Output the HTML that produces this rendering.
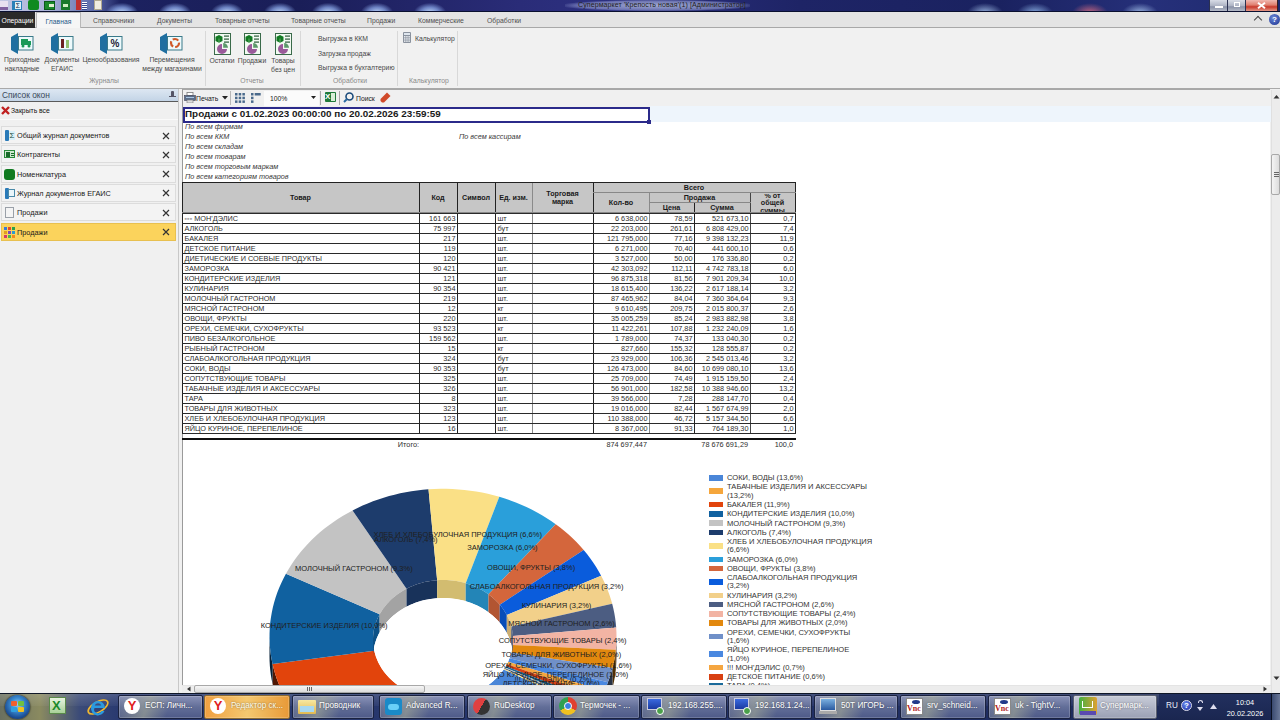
<!DOCTYPE html>
<html><head><meta charset="utf-8">
<style>
*{box-sizing:border-box;margin:0;padding:0}
html,body{width:1280px;height:720px;overflow:hidden;background:#f0f0f0;font-family:"Liberation Sans",sans-serif;color:#222}
.a{position:absolute;white-space:nowrap}
#titlebar{position:absolute;left:0;top:0;width:1280px;height:12px;background:linear-gradient(90deg,#c4c8e4 0px,#a8b0d8 50px,#5a68a8 95px,#1c2260 120px,#1a1e58 300px,#2a2c78 520px,#2c3080 600px,#1e2466 800px,#1a2260 1000px,#26307a 1150px,#1e2a6e 1280px);border-bottom:1px solid #0a1030;overflow:hidden}
.blob{position:absolute;border-radius:50%;filter:blur(3px)}
#tabs{position:absolute;left:0;top:12px;width:1280px;height:16px;background:#e4e4e4;border-bottom:1px solid #a8a8a8;font-size:6.8px;color:#505050}
.tab{position:absolute;top:0;height:16px;line-height:18px;text-align:center}
#ribbon{position:absolute;left:0;top:28px;width:1280px;height:61px;background:#f1f1f1;border-bottom:1px solid #a9a9a9;font-size:6.8px;color:#484848}
.rsep{position:absolute;top:3px;width:1px;height:55px;background:#d8d8d8}
.glabel{position:absolute;top:49px;font-size:6.8px;color:#8a8a8a;text-align:center}
.blabel{position:absolute;text-align:center;line-height:8.5px;color:#484848}
</style></head><body>
<div id="titlebar">
 <div class="a" style="left:106px;top:3px;width:32px;height:14px;background:radial-gradient(ellipse at 50% 70%,rgba(190,215,250,1) 0,rgba(140,170,235,0.7) 40%,rgba(60,80,160,0) 72%)"></div>
 <div class="a" style="left:159px;top:3px;width:32px;height:14px;background:radial-gradient(ellipse at 50% 70%,rgba(190,215,250,1) 0,rgba(140,170,235,0.7) 40%,rgba(60,80,160,0) 72%)"></div>
 <div class="a" style="left:211px;top:3px;width:32px;height:14px;background:radial-gradient(ellipse at 50% 70%,rgba(190,215,250,1) 0,rgba(140,170,235,0.7) 40%,rgba(60,80,160,0) 72%)"></div>
 <div class="a" style="left:264px;top:3px;width:32px;height:14px;background:radial-gradient(ellipse at 50% 70%,rgba(190,215,250,1) 0,rgba(140,170,235,0.7) 40%,rgba(60,80,160,0) 72%)"></div>
 <div class="a" style="left:312px;top:3px;width:32px;height:14px;background:radial-gradient(ellipse at 50% 70%,rgba(190,215,250,1) 0,rgba(140,170,235,0.7) 40%,rgba(60,80,160,0) 72%)"></div>
 <div class="a" style="left:361px;top:3px;width:32px;height:14px;background:radial-gradient(ellipse at 50% 70%,rgba(190,215,250,1) 0,rgba(140,170,235,0.7) 40%,rgba(60,80,160,0) 72%)"></div>
 <div class="a" style="left:414px;top:3px;width:32px;height:14px;background:radial-gradient(ellipse at 50% 70%,rgba(190,215,250,1) 0,rgba(140,170,235,0.7) 40%,rgba(60,80,160,0) 72%)"></div>
 <div class="a" style="left:967px;top:3px;width:36px;height:14px;background:radial-gradient(ellipse at 50% 70%,rgba(170,200,240,0.85) 0,rgba(170,200,240,0.3) 45%,rgba(60,80,160,0) 70%)"></div>
 <div class="a" style="left:1017px;top:3px;width:36px;height:14px;background:radial-gradient(ellipse at 50% 70%,rgba(150,190,240,0.85) 0,rgba(150,190,240,0.3) 45%,rgba(60,80,160,0) 70%)"></div>
 <div class="a" style="left:1072px;top:3px;width:36px;height:14px;background:radial-gradient(ellipse at 50% 70%,rgba(220,110,130,0.85) 0,rgba(220,110,130,0.3) 45%,rgba(60,80,160,0) 70%)"></div>
 <div class="a" style="left:1122px;top:3px;width:36px;height:14px;background:radial-gradient(ellipse at 50% 70%,rgba(170,200,240,0.85) 0,rgba(170,200,240,0.3) 45%,rgba(60,80,160,0) 70%)"></div>
 <div class="a" style="left:565px;top:0px;width:185px;height:11px;background:radial-gradient(ellipse at 50% 50%,rgba(200,210,240,0.75) 0,rgba(170,180,230,0.5) 60%,rgba(100,110,180,0) 75%)"></div>
 <div class="a" style="left:578px;top:0px;font-size:7px;line-height:10px;color:#222;letter-spacing:0.1px">Супермаркет 'Крепость новая'(1) [Администратор]</div>
 <!-- quick icons -->
 <div class="a" style="left:0;top:1px;width:8px;height:9px;background:#e8e0f0;border-bottom:3px solid #8060a0"></div>
 <div class="a" style="left:12px;top:1px;width:10px;height:9px;background:#2a80b8"><div class="a" style="left:3px;top:1px;width:6px;height:7px;background:#dff2f8;font-size:7px;line-height:7px;color:#124;text-align:center">Σ</div></div>
 <div class="a" style="left:28px;top:0px;width:11px;height:10px;background:#108a20;border-radius:2px"></div>
 <div class="a" style="left:44px;top:1px;width:11px;height:9px;background:#1a8a2a;border:1px solid #0a5a1a"><div class="a" style="left:4px;top:2px;width:5px;height:3px;background:#dff0d0"></div></div>
 <div class="a" style="left:61px;top:0px;width:9px;height:10px;background:#1a7a2a"><div class="a" style="left:2px;top:4px;width:5px;height:3px;background:#d0f0c0"></div></div>
 <div class="a" style="left:76px;top:0px;width:5px;height:10px;background:#c03030"></div>
 <div class="a" style="left:82px;top:2px;width:5px;height:8px;background:repeating-linear-gradient(180deg,#fff 0 1px,#3a4a90 1px 2px)"></div>
 <div class="a" style="left:94px;top:0px;width:8px;height:10px;background:#f0ece0;border:1px solid #b0a890"></div>
 <!-- window buttons -->
 <div class="a" style="left:1209px;top:0;width:19px;height:12px;background:linear-gradient(#d8dce6,#b0b6c6 50%,#8a92a8 62%,#b4bac8);border:1px solid #2a3050;border-top:0"><div class="a" style="left:5px;top:6px;width:8px;height:2px;background:#fff"></div></div>
 <div class="a" style="left:1228px;top:0;width:18px;height:12px;background:linear-gradient(#d8dce6,#b0b6c6 50%,#8a92a8 62%,#b4bac8);border:1px solid #2a3050;border-left:0;border-top:0"><div class="a" style="left:6px;top:2px;width:6px;height:5px;border:1px solid #fff"></div></div>
 <div class="a" style="left:1246px;top:0;width:32px;height:12px;background:linear-gradient(#f0b8b0,#e08070 45%,#c8382a 62%,#e49888);border:1px solid #3a2020;border-left:0;border-top:0;"><svg class="a" style="left:11px;top:2px" width="9" height="7" viewBox="0 0 9 7"><path d="M1 0.8 L8 6.2 M8 0.8 L1 6.2" stroke="#fff" stroke-width="2"/></svg></div>
</div>
<div id="tabs">
 <div class="tab" style="left:0;width:35px;background:#2a2a2a;color:#fff">Операции</div>
 <div class="tab" style="left:36px;width:45px;top:0;height:17px;background:#f6f6f6;border:1px solid #b8b8b8;border-bottom:0;color:#2a5a8a">Главная</div>
 <div class="tab" style="left:93px">Справочники</div>
 <div class="tab" style="left:157px">Документы</div>
 <div class="tab" style="left:215px">Товарные отчеты</div>
 <div class="tab" style="left:291px">Товарные отчеты</div>
 <div class="tab" style="left:367px">Продажи</div>
 <div class="tab" style="left:418px">Коммерческие</div>
 <div class="tab" style="left:487px">Обработки</div>
 <div class="a" style="left:1255px;top:5px;width:6px;height:6px;border-left:1.5px solid #444;border-top:1.5px solid #444;transform:rotate(45deg)"></div>
 <div class="a" style="left:1269px;top:2px;width:11px;height:11px;border-radius:50%;background:radial-gradient(circle at 40% 35%,#6a88d8,#1a3090);color:#fff;font-size:8px;line-height:11px;text-align:center;font-weight:bold">?</div>
</div>
<div id="ribbon">
 <!-- Журналы -->
 <svg class="a" style="left:11px;top:5px" width="23" height="21" viewBox="0 0 23 21">
  <polygon points="0,4 7,0 7,21 0,17" fill="#1f6fa0"/>
  <rect x="7.5" y="3.5" width="14.5" height="13.5" fill="#eefafc" stroke="#3a7a8a" stroke-width="1"/>
  <rect x="10" y="6" width="7" height="6" fill="#1a9a5a"/><rect x="17" y="8" width="3" height="4" fill="#1a9a5a"/>
  <circle cx="12" cy="13" r="1.5" fill="#1a9a5a"/><circle cx="18" cy="13" r="1.5" fill="#1a9a5a"/>
 </svg>
 <div class="blabel" style="left:0px;top:28px;width:44px">Приходные<br>накладные</div>
 <svg class="a" style="left:51px;top:5px" width="23" height="21" viewBox="0 0 23 21">
  <polygon points="0,4 7,0 7,21 0,17" fill="#1f6fa0"/>
  <rect x="7.5" y="3.5" width="14.5" height="13.5" fill="#eefafc" stroke="#3a7a8a" stroke-width="1"/>
  <rect x="10" y="6" width="3" height="9" fill="#6a2020"/><rect x="15" y="7" width="3" height="8" fill="#90c070"/>
 </svg>
 <div class="blabel" style="left:39px;top:28px;width:46px">Документы<br>ЕГАИС</div>
 <svg class="a" style="left:100px;top:5px" width="23" height="21" viewBox="0 0 23 21">
  <polygon points="0,4 7,0 7,21 0,17" fill="#1f6fa0"/>
  <rect x="7.5" y="3.5" width="14.5" height="13.5" fill="#eefafc" stroke="#3a7a8a" stroke-width="1"/>
  <text x="15" y="14" font-size="10" font-family="Liberation Sans" font-weight="bold" fill="#223" text-anchor="middle">%</text>
 </svg>
 <div class="blabel" style="left:82px;top:28px;width:58px">Ценообразования</div>
 <svg class="a" style="left:160px;top:5px" width="23" height="21" viewBox="0 0 23 21">
  <polygon points="0,4 7,0 7,21 0,17" fill="#1f6fa0"/>
  <rect x="7.5" y="3.5" width="14.5" height="13.5" fill="#eefafc" stroke="#3a7a8a" stroke-width="1"/>
  <circle cx="15" cy="10" r="4" fill="none" stroke="#d05a2a" stroke-width="2.2" stroke-dasharray="6 2"/>
 </svg>
 <div class="blabel" style="left:138px;top:28px;width:68px">Перемещения<br>между магазинами</div>
 <div class="glabel" style="left:60px;width:88px">Журналы</div>
 <div class="rsep" style="left:205px"></div>
 <!-- Отчеты -->
 <svg class="a" style="left:214px;top:5px" width="17" height="22" viewBox="0 0 17 22">
  <rect x="0.5" y="0.5" width="16" height="21" fill="#f2faf2" stroke="#3a6a4a"/>
  <path d="M5 2 L8.5 3.8 L8.5 8 L5 9.8 L1.5 8 L1.5 3.8Z" fill="#117a22"/><path d="M5 5.5 L5 9.8" stroke="#9ad09a" stroke-width="0.6"/>
  <rect x="10" y="2.5" width="5" height="1.2" fill="#2a5a3a"/><rect x="10" y="5.5" width="5" height="1.2" fill="#2a5a3a"/><rect x="10" y="8.5" width="5" height="1.2" fill="#2a5a3a"/>
  <path d="M8 16 L8 11 A5 5 0 1 0 13 16 Z" fill="#9a5a9a"/><path d="M9.2 14.8 L9.2 10 A4.8 4.8 0 0 1 14 14.8 Z" fill="#5a9a6a"/>
 </svg>
 <div class="blabel" style="left:206px;top:29px;width:32px">Остатки</div>
 <svg class="a" style="left:244px;top:5px" width="17" height="22" viewBox="0 0 17 22">
  <rect x="0.5" y="0.5" width="16" height="21" fill="#f2faf2" stroke="#3a6a4a"/>
  <path d="M5 2 L8.5 3.8 L8.5 8 L5 9.8 L1.5 8 L1.5 3.8Z" fill="#117a22"/><path d="M5 5.5 L5 9.8" stroke="#9ad09a" stroke-width="0.6"/>
  <rect x="10" y="2.5" width="5" height="1.2" fill="#2a5a3a"/><rect x="10" y="5.5" width="5" height="1.2" fill="#2a5a3a"/><rect x="10" y="8.5" width="5" height="1.2" fill="#2a5a3a"/>
  <path d="M8 16 L8 11 A5 5 0 1 0 13 16 Z" fill="#9a5a9a"/><path d="M9.2 14.8 L9.2 10 A4.8 4.8 0 0 1 14 14.8 Z" fill="#5a9a6a"/>
 </svg>
 <div class="blabel" style="left:236px;top:29px;width:32px">Продажи</div>
 <svg class="a" style="left:275px;top:5px" width="17" height="22" viewBox="0 0 17 22">
  <rect x="0.5" y="0.5" width="16" height="21" fill="#f2faf2" stroke="#3a6a4a"/>
  <path d="M5 2 L8.5 3.8 L8.5 8 L5 9.8 L1.5 8 L1.5 3.8Z" fill="#117a22"/><path d="M5 5.5 L5 9.8" stroke="#9ad09a" stroke-width="0.6"/>
  <rect x="10" y="2.5" width="5" height="1.2" fill="#2a5a3a"/><rect x="10" y="5.5" width="5" height="1.2" fill="#2a5a3a"/><rect x="10" y="8.5" width="5" height="1.2" fill="#2a5a3a"/>
  <path d="M8 16 L8 11 A5 5 0 1 0 13 16 Z" fill="#9a5a9a"/><path d="M9.2 14.8 L9.2 10 A4.8 4.8 0 0 1 14 14.8 Z" fill="#5a9a6a"/>
 </svg>
 <div class="blabel" style="left:268px;top:29px;width:30px">Товары<br>без цен</div>
 <div class="glabel" style="left:222px;width:60px">Отчеты</div>
 <div class="rsep" style="left:300px"></div>
 <!-- Обработки -->
 <div class="a" style="left:318px;top:7px;line-height:8px">Выгрузка в ККМ</div>
 <div class="a" style="left:318px;top:21.5px;line-height:8px">Загрузка продаж</div>
 <div class="a" style="left:318px;top:36px;line-height:8px">Выгрузка в бухгалтерию</div>
 <div class="glabel" style="left:320px;width:60px">Обработки</div>
 <div class="rsep" style="left:397px"></div>
 <!-- Калькулятор -->
 <svg class="a" style="left:403px;top:4px" width="8" height="11" viewBox="0 0 8 11"><rect x="0" y="0" width="8" height="11" rx="1" fill="#8a929e"/><rect x="1" y="1" width="6" height="2" fill="#dfe6ee"/><g fill="#e8ecf0"><rect x="1" y="4" width="1.5" height="1.5"/><rect x="3.2" y="4" width="1.5" height="1.5"/><rect x="5.4" y="4" width="1.5" height="1.5"/><rect x="1" y="6.2" width="1.5" height="1.5"/><rect x="3.2" y="6.2" width="1.5" height="1.5"/><rect x="5.4" y="6.2" width="1.5" height="1.5"/><rect x="1" y="8.4" width="1.5" height="1.5"/><rect x="3.2" y="8.4" width="1.5" height="1.5"/><rect x="5.4" y="8.4" width="1.5" height="1.5"/></g></svg>
 <div class="a" style="left:415px;top:7px;line-height:8px">Калькулятор</div>
 <div class="glabel" style="left:400px;width:58px">Калькулятор</div>
 <div class="rsep" style="left:457px"></div>
</div>
<div id="left" class="a" style="left:0;top:89px;width:179px;height:604px;background:#f0f0f0;border-right:1px solid #c8c8c8">
 <div class="a" style="left:0;top:0;width:178px;height:13px;background:linear-gradient(#dde7f2,#c3d4e6);border-bottom:1px solid #5a5a5a"></div>
 <div class="a" style="left:2px;top:0px;font-size:8.4px;line-height:12px;color:#3a4a5a">Список окон</div>
 <div class="a" style="left:171px;top:2px;width:3px;height:6px;background:#556;border-radius:1px"></div>
 <div class="a" style="left:169px;top:7px;width:7px;height:1px;background:#556"></div>
 <!-- close all -->
 <svg class="a" style="left:1px;top:17px" width="9" height="9" viewBox="0 0 9 9"><path d="M1 1 L8 8 M8 1 L1 8" stroke="#c02020" stroke-width="2.4"/></svg>
 <div class="a" style="left:11px;top:16px;font-size:6.8px;line-height:11px;color:#111">Закрыть все</div>
 <div class="a" style="left:0;top:30px;width:178px;height:1px;background:#fafafa"></div>
<div class="a" style="left:1px;top:37.0px;width:175px;height:18px;background:#f3f3f3;border:1px solid #dcdcdc"></div>
<div class="a" style="left:5px;top:41.0px;width:4px;height:11px;background:#2a7ab8;border-radius:1px"></div><div class="a" style="left:9px;top:42.0px;width:6px;height:9px;background:#d8f0f8;font-size:8px;line-height:9px;color:#1a4a3a;text-align:center">Σ</div>
<div class="a" style="left:17px;top:37.0px;font-size:7.3px;line-height:19px;color:#1a1a1a">Общий журнал документов</div>
<svg class="a" style="left:162px;top:42.5px" width="8" height="8" viewBox="0 0 8 8"><path d="M1 1 L7 7 M7 1 L1 7" stroke="#333" stroke-width="1.2"/></svg>
<div class="a" style="left:1px;top:56.3px;width:175px;height:18px;background:#f3f3f3;border:1px solid #dcdcdc"></div>
<div class="a" style="left:4px;top:61.3px;width:11px;height:8px;background:#cfe8cf;border:1px solid #2a8a3a"><div class="a" style="left:1px;top:1px;width:4px;height:5px;background:#1a6a2a"></div><div class="a" style="left:6px;top:2px;width:3px;height:1px;background:#1a6a2a"></div><div class="a" style="left:6px;top:4px;width:3px;height:1px;background:#1a6a2a"></div></div>
<div class="a" style="left:17px;top:56.3px;font-size:7.3px;line-height:19px;color:#1a1a1a">Контрагенты</div>
<svg class="a" style="left:162px;top:61.8px" width="8" height="8" viewBox="0 0 8 8"><path d="M1 1 L7 7 M7 1 L1 7" stroke="#333" stroke-width="1.2"/></svg>
<div class="a" style="left:1px;top:75.6px;width:175px;height:18px;background:#f3f3f3;border:1px solid #dcdcdc"></div>
<div class="a" style="left:4px;top:79.6px;width:11px;height:11px;background:#107a20;border-radius:3px"></div>
<div class="a" style="left:17px;top:75.6px;font-size:7.3px;line-height:19px;color:#1a1a1a">Номенклатура</div>
<svg class="a" style="left:162px;top:81.1px" width="8" height="8" viewBox="0 0 8 8"><path d="M1 1 L7 7 M7 1 L1 7" stroke="#333" stroke-width="1.2"/></svg>
<div class="a" style="left:1px;top:94.9px;width:175px;height:18px;background:#f3f3f3;border:1px solid #dcdcdc"></div>
<div class="a" style="left:5px;top:98.9px;width:4px;height:11px;background:#2a7ab8;border-radius:1px"></div><div class="a" style="left:8px;top:100.4px;width:7px;height:8px;border:1px solid #4a8aa8;background:#eaf6fa"></div>
<div class="a" style="left:17px;top:94.9px;font-size:7.3px;line-height:19px;color:#1a1a1a">Журнал документов ЕГАИС</div>
<svg class="a" style="left:162px;top:100.4px" width="8" height="8" viewBox="0 0 8 8"><path d="M1 1 L7 7 M7 1 L1 7" stroke="#333" stroke-width="1.2"/></svg>
<div class="a" style="left:1px;top:114.2px;width:175px;height:18px;background:#f3f3f3;border:1px solid #dcdcdc"></div>
<div class="a" style="left:5px;top:118.2px;width:9px;height:11px;background:#f4f4f4;border:1px solid #9aa0a8"></div>
<div class="a" style="left:17px;top:114.2px;font-size:7.3px;line-height:19px;color:#1a1a1a">Продажи</div>
<svg class="a" style="left:162px;top:119.7px" width="8" height="8" viewBox="0 0 8 8"><path d="M1 1 L7 7 M7 1 L1 7" stroke="#333" stroke-width="1.2"/></svg>
<div class="a" style="left:1px;top:133.5px;width:175px;height:18px;background:#fbd35c;border:1px solid #e8c050"></div>
<div class="a" style="left:4px;top:137.5px;width:3px;height:3px;background:#3a7ad8"></div><div class="a" style="left:8px;top:137.5px;width:3px;height:3px;background:#e04a2a"></div><div class="a" style="left:12px;top:137.5px;width:3px;height:3px;background:#2aa04a"></div><div class="a" style="left:4px;top:141.5px;width:3px;height:3px;background:#e0a020"></div><div class="a" style="left:8px;top:141.5px;width:3px;height:3px;background:#7a4ab8"></div><div class="a" style="left:12px;top:141.5px;width:3px;height:3px;background:#2a9ad0"></div><div class="a" style="left:4px;top:145.5px;width:3px;height:3px;background:#d03a6a"></div><div class="a" style="left:8px;top:145.5px;width:3px;height:3px;background:#4ab84a"></div><div class="a" style="left:12px;top:145.5px;width:3px;height:3px;background:#f08a20"></div>
<div class="a" style="left:17px;top:133.5px;font-size:7.3px;line-height:19px;color:#1a1a1a">Продажи</div>
<svg class="a" style="left:162px;top:139.0px" width="8" height="8" viewBox="0 0 8 8"><path d="M1 1 L7 7 M7 1 L1 7" stroke="#333" stroke-width="1.2"/></svg>
</div>
<style>
.th{font-size:7.2px;font-weight:bold;color:#1a1a1a;white-space:nowrap}
.td{font-size:7.3px;line-height:10px;color:#2e2e2e;white-space:nowrap;overflow:hidden}
.flt{position:absolute;left:185px;font-size:7.3px;font-style:italic;color:#3a3a3a;line-height:10px;white-space:nowrap}
</style>
<div id="content" class="a" style="left:182px;top:89px;width:1088px;height:596px;background:#fff;border-left:1px solid #9a9a9a;border-top:1px solid #a8a8a8;overflow:hidden"></div>
<!-- toolbar -->
<div class="a" style="left:183px;top:90px;width:1087px;height:17px;background:#f0f0f0"></div>
<svg class="a" style="left:184px;top:92px" width="12" height="11" viewBox="0 0 12 11">
 <rect x="3" y="0.5" width="6" height="3" fill="#fff" stroke="#777" stroke-width="0.8"/>
 <rect x="0.5" y="3.5" width="11" height="5" fill="#5a6e8a" stroke="#445" stroke-width="0.6"/>
 <rect x="2" y="5" width="8" height="1" fill="#aac4e0"/>
 <rect x="3" y="8" width="6" height="3" fill="#ddd" stroke="#777" stroke-width="0.6"/>
</svg>
<div class="a" style="left:196px;top:94px;font-size:6.8px;line-height:10px;color:#222">Печать</div>
<svg class="a" style="left:222px;top:96px" width="6" height="4" viewBox="0 0 6 4"><path d="M0 0 L6 0 L3 3.5Z" fill="#222"/></svg>
<div class="a" style="left:230px;top:91px;width:1px;height:14px;background:#b8b8b8"></div>
<svg class="a" style="left:235px;top:93px" width="10" height="10" viewBox="0 0 10 10" fill="#4a6a8c">
 <rect x="0" y="0" width="2.5" height="2.5"/><rect x="3.7" y="0" width="2.5" height="2.5"/><rect x="7.4" y="0" width="2.5" height="2.5"/>
 <rect x="0" y="3.7" width="2.5" height="2.5"/><rect x="3.7" y="3.7" width="2.5" height="2.5"/><rect x="7.4" y="3.7" width="2.5" height="2.5"/>
 <rect x="0" y="7.4" width="2.5" height="2.5"/><rect x="3.7" y="7.4" width="2.5" height="2.5"/><rect x="7.4" y="7.4" width="2.5" height="2.5"/>
</svg>
<svg class="a" style="left:251px;top:93px" width="10" height="10" viewBox="0 0 10 10" fill="#4a6a8c">
 <rect x="0" y="0" width="2.5" height="2.5"/><rect x="3.7" y="0" width="6" height="2.5"/>
 <rect x="0" y="3.7" width="2.5" height="2.5"/><rect x="0" y="7.4" width="2.5" height="2.5"/>
</svg>
<div class="a" style="left:264px;top:91px;width:55px;height:15px;background:#fbfbfb"></div>
<div class="a" style="left:270px;top:94px;font-size:6.8px;line-height:10px;color:#222">100%</div>
<svg class="a" style="left:311px;top:96px" width="5" height="4" viewBox="0 0 5 4"><path d="M0 0 L5 0 L2.5 3Z" fill="#222"/></svg>
<div class="a" style="left:320px;top:91px;width:1px;height:14px;background:#a8a8a8"></div>
<div class="a" style="left:325px;top:92px;width:11px;height:10px;background:#1f7a3a;border-radius:1px"><div class="a" style="left:6px;top:1px;width:4px;height:8px;background:#d8eed8"></div><div class="a" style="left:0px;top:-1px;font-size:8px;font-weight:bold;line-height:11px;color:#fff">X</div></div>
<div class="a" style="left:339px;top:91px;width:1px;height:14px;background:#a8a8a8"></div>
<svg class="a" style="left:343px;top:92px" width="11" height="11" viewBox="0 0 11 11"><circle cx="6.5" cy="4.5" r="3.5" fill="none" stroke="#1a4a7a" stroke-width="1.6"/><path d="M4 7 L1 10" stroke="#2a6aa0" stroke-width="2"/></svg>
<div class="a" style="left:356px;top:94px;font-size:6.8px;line-height:10px;color:#222">Поиск</div>
<svg class="a" style="left:380px;top:92px" width="11" height="11" viewBox="0 0 11 11"><path d="M7 0.5 L10.5 4 L4 10.5 L2 10.5 L0.5 9 L0.5 7Z" fill="#d04a2a"/></svg>
<!-- report header -->
<div class="a" style="left:650px;top:106px;width:621px;height:16px;background:#eef5fc"></div>
<div class="a" style="left:183px;top:107px;width:467px;height:16px;border:2px solid #2b2a8a;background:#fff"></div>
<div class="a" style="left:647px;top:120px;width:4px;height:4px;background:#2b2a8a"></div>
<div class="a" style="left:185px;top:107.5px;font-size:9.9px;font-weight:bold;line-height:12px;color:#1a1a1a">Продажи с 01.02.2023 00:00:00 по 20.02.2026 23:59:59</div>
<div class="flt" style="top:121.5px">По всем фирмам</div>
<div class="flt" style="top:132px">По всем ККМ</div>
<div class="flt" style="left:459px;top:132px">По всем кассирам</div>
<div class="flt" style="top:142px">По всем складам</div>
<div class="flt" style="top:152px">По всем товарам</div>
<div class="flt" style="top:162px">По всем торговым маркам</div>
<div class="flt" style="top:172px">По всем категориям товаров</div>
<div class="a" style="left:182px;top:182px;width:613px;height:31px;background:#c6c6c6"></div>
<div class="a" style="left:182.0px;top:182.0px;width:1px;height:251.0px;background:#222"></div>
<div class="a" style="left:419.0px;top:182.0px;width:1px;height:251.0px;background:#222"></div>
<div class="a" style="left:457.0px;top:182.0px;width:1px;height:251.0px;background:#222"></div>
<div class="a" style="left:495.0px;top:182.0px;width:1px;height:251.0px;background:#222"></div>
<div class="a" style="left:532.0px;top:182.0px;width:1px;height:251.0px;background:#8a8a8a"></div>
<div class="a" style="left:593.0px;top:182.0px;width:1px;height:251.0px;background:#222"></div>
<div class="a" style="left:649.0px;top:182.0px;width:1px;height:251.0px;background:#8a8a8a"></div>
<div class="a" style="left:694.0px;top:182.0px;width:1px;height:251.0px;background:#222"></div>
<div class="a" style="left:750.0px;top:182.0px;width:1px;height:251.0px;background:#444"></div>
<div class="a" style="left:795.0px;top:182.0px;width:1px;height:251.0px;background:#222"></div>
<div class="a" style="left:648px;top:183px;width:3px;height:9px;background:#c6c6c6"></div>
<div class="a" style="left:693px;top:183px;width:3px;height:19px;background:#c6c6c6"></div>
<div class="a" style="left:749px;top:183px;width:3px;height:9px;background:#c6c6c6"></div>
<div class="a" style="left:182.0px;top:182.0px;width:614.0px;height:1px;background:#222"></div>
<div class="a" style="left:593.0px;top:192.0px;width:203.0px;height:1px;background:#888"></div>
<div class="a" style="left:649.0px;top:202.0px;width:102.0px;height:1px;background:#888"></div>
<div class="a" style="left:182.0px;top:212.0px;width:614.0px;height:2px;background:#888"></div>
<div class="a" style="left:182.0px;top:213.0px;width:614.0px;height:1px;background:#2a2a2a"></div>
<div class="a" style="left:182.0px;top:223.0px;width:614.0px;height:1px;background:#2a2a2a"></div>
<div class="a" style="left:182.0px;top:233.0px;width:614.0px;height:1px;background:#2a2a2a"></div>
<div class="a" style="left:182.0px;top:243.0px;width:614.0px;height:1px;background:#2a2a2a"></div>
<div class="a" style="left:182.0px;top:253.0px;width:614.0px;height:1px;background:#2a2a2a"></div>
<div class="a" style="left:182.0px;top:263.0px;width:614.0px;height:1px;background:#2a2a2a"></div>
<div class="a" style="left:182.0px;top:273.0px;width:614.0px;height:1px;background:#2a2a2a"></div>
<div class="a" style="left:182.0px;top:283.0px;width:614.0px;height:1px;background:#2a2a2a"></div>
<div class="a" style="left:182.0px;top:293.0px;width:614.0px;height:1px;background:#2a2a2a"></div>
<div class="a" style="left:182.0px;top:303.0px;width:614.0px;height:1px;background:#2a2a2a"></div>
<div class="a" style="left:182.0px;top:313.0px;width:614.0px;height:1px;background:#2a2a2a"></div>
<div class="a" style="left:182.0px;top:323.0px;width:614.0px;height:1px;background:#2a2a2a"></div>
<div class="a" style="left:182.0px;top:333.0px;width:614.0px;height:1px;background:#2a2a2a"></div>
<div class="a" style="left:182.0px;top:343.0px;width:614.0px;height:1px;background:#2a2a2a"></div>
<div class="a" style="left:182.0px;top:353.0px;width:614.0px;height:1px;background:#2a2a2a"></div>
<div class="a" style="left:182.0px;top:363.0px;width:614.0px;height:1px;background:#2a2a2a"></div>
<div class="a" style="left:182.0px;top:373.0px;width:614.0px;height:1px;background:#2a2a2a"></div>
<div class="a" style="left:182.0px;top:383.0px;width:614.0px;height:1px;background:#2a2a2a"></div>
<div class="a" style="left:182.0px;top:393.0px;width:614.0px;height:1px;background:#2a2a2a"></div>
<div class="a" style="left:182.0px;top:403.0px;width:614.0px;height:1px;background:#2a2a2a"></div>
<div class="a" style="left:182.0px;top:413.0px;width:614.0px;height:1px;background:#2a2a2a"></div>
<div class="a" style="left:182.0px;top:423.0px;width:614.0px;height:1px;background:#2a2a2a"></div>
<div class="a" style="left:182.0px;top:433.0px;width:614.0px;height:1px;background:#2a2a2a"></div>
<div class="a th" style="left:182.0px;width:237.0px;top:193.5px;line-height:8px;text-align:center">Товар</div>
<div class="a th" style="left:419.0px;width:38.0px;top:193.5px;line-height:8px;text-align:center">Код</div>
<div class="a th" style="left:457.0px;width:38.0px;top:193.5px;line-height:8px;text-align:center">Символ</div>
<div class="a th" style="left:495.0px;width:37.0px;top:193.5px;line-height:8px;text-align:center">Ед. изм.</div>
<div class="a th" style="left:532px;width:61.0px;top:189.5px;line-height:8px;text-align:center">Торговая<br>марка</div>
<div class="a th" style="left:593.0px;width:202.0px;top:183.5px;line-height:8px;text-align:center">Всего</div>
<div class="a th" style="left:593.0px;width:56.0px;top:198.5px;line-height:8px;text-align:center">Кол-во</div>
<div class="a th" style="left:649.0px;width:101.0px;top:193.8px;line-height:8px;text-align:center">Продажа</div>
<div class="a th" style="left:649.0px;width:45.0px;top:204.0px;line-height:8px;text-align:center">Цена</div>
<div class="a th" style="left:694.0px;width:56.0px;top:204.0px;line-height:8px;text-align:center">Сумма</div>
<div class="a" style="left:750px;width:45.0px;top:193.5px;height:18.5px;overflow:hidden"><div class="th" style="text-align:center;line-height:7.6px;margin-top:-2px">% от<br>общей<br>суммы</div></div>
<div class="a td" style="left:183.0px;width:236.0px;top:213.5px;text-align:left;padding-left:1.5px"><span style='color:#aaa'>▪▪▪</span> МОН'ДЭЛИС</div>
<div class="a td" style="left:420.0px;width:37.0px;top:213.5px;text-align:right;padding-right:1.5px">161 663</div>
<div class="a td" style="left:496.0px;width:36.0px;top:213.5px;text-align:left;padding-left:1.5px">шт</div>
<div class="a td" style="left:594.0px;width:55.0px;top:213.5px;text-align:right;padding-right:1.5px">6 638,000</div>
<div class="a td" style="left:650.0px;width:44.0px;top:213.5px;text-align:right;padding-right:1.5px">78,59</div>
<div class="a td" style="left:695.0px;width:55.0px;top:213.5px;text-align:right;padding-right:1.5px">521 673,10</div>
<div class="a td" style="left:751.0px;width:44.0px;top:213.5px;text-align:right;padding-right:1.5px">0,7</div>
<div class="a td" style="left:183.0px;width:236.0px;top:223.5px;text-align:left;padding-left:1.5px">АЛКОГОЛЬ</div>
<div class="a td" style="left:420.0px;width:37.0px;top:223.5px;text-align:right;padding-right:1.5px">75 997</div>
<div class="a td" style="left:496.0px;width:36.0px;top:223.5px;text-align:left;padding-left:1.5px">бут</div>
<div class="a td" style="left:594.0px;width:55.0px;top:223.5px;text-align:right;padding-right:1.5px">22 203,000</div>
<div class="a td" style="left:650.0px;width:44.0px;top:223.5px;text-align:right;padding-right:1.5px">261,61</div>
<div class="a td" style="left:695.0px;width:55.0px;top:223.5px;text-align:right;padding-right:1.5px">6 808 429,00</div>
<div class="a td" style="left:751.0px;width:44.0px;top:223.5px;text-align:right;padding-right:1.5px">7,4</div>
<div class="a td" style="left:183.0px;width:236.0px;top:233.5px;text-align:left;padding-left:1.5px">БАКАЛЕЯ</div>
<div class="a td" style="left:420.0px;width:37.0px;top:233.5px;text-align:right;padding-right:1.5px">217</div>
<div class="a td" style="left:496.0px;width:36.0px;top:233.5px;text-align:left;padding-left:1.5px">шт.</div>
<div class="a td" style="left:594.0px;width:55.0px;top:233.5px;text-align:right;padding-right:1.5px">121 795,000</div>
<div class="a td" style="left:650.0px;width:44.0px;top:233.5px;text-align:right;padding-right:1.5px">77,16</div>
<div class="a td" style="left:695.0px;width:55.0px;top:233.5px;text-align:right;padding-right:1.5px">9 398 132,23</div>
<div class="a td" style="left:751.0px;width:44.0px;top:233.5px;text-align:right;padding-right:1.5px">11,9</div>
<div class="a td" style="left:183.0px;width:236.0px;top:243.5px;text-align:left;padding-left:1.5px">ДЕТСКОЕ ПИТАНИЕ</div>
<div class="a td" style="left:420.0px;width:37.0px;top:243.5px;text-align:right;padding-right:1.5px">119</div>
<div class="a td" style="left:496.0px;width:36.0px;top:243.5px;text-align:left;padding-left:1.5px">шт.</div>
<div class="a td" style="left:594.0px;width:55.0px;top:243.5px;text-align:right;padding-right:1.5px">6 271,000</div>
<div class="a td" style="left:650.0px;width:44.0px;top:243.5px;text-align:right;padding-right:1.5px">70,40</div>
<div class="a td" style="left:695.0px;width:55.0px;top:243.5px;text-align:right;padding-right:1.5px">441 600,10</div>
<div class="a td" style="left:751.0px;width:44.0px;top:243.5px;text-align:right;padding-right:1.5px">0,6</div>
<div class="a td" style="left:183.0px;width:236.0px;top:253.5px;text-align:left;padding-left:1.5px">ДИЕТИЧЕСКИЕ И СОЕВЫЕ ПРОДУКТЫ</div>
<div class="a td" style="left:420.0px;width:37.0px;top:253.5px;text-align:right;padding-right:1.5px">120</div>
<div class="a td" style="left:496.0px;width:36.0px;top:253.5px;text-align:left;padding-left:1.5px">шт.</div>
<div class="a td" style="left:594.0px;width:55.0px;top:253.5px;text-align:right;padding-right:1.5px">3 527,000</div>
<div class="a td" style="left:650.0px;width:44.0px;top:253.5px;text-align:right;padding-right:1.5px">50,00</div>
<div class="a td" style="left:695.0px;width:55.0px;top:253.5px;text-align:right;padding-right:1.5px">176 336,80</div>
<div class="a td" style="left:751.0px;width:44.0px;top:253.5px;text-align:right;padding-right:1.5px">0,2</div>
<div class="a td" style="left:183.0px;width:236.0px;top:263.5px;text-align:left;padding-left:1.5px">ЗАМОРОЗКА</div>
<div class="a td" style="left:420.0px;width:37.0px;top:263.5px;text-align:right;padding-right:1.5px">90 421</div>
<div class="a td" style="left:496.0px;width:36.0px;top:263.5px;text-align:left;padding-left:1.5px">шт.</div>
<div class="a td" style="left:594.0px;width:55.0px;top:263.5px;text-align:right;padding-right:1.5px">42 303,092</div>
<div class="a td" style="left:650.0px;width:44.0px;top:263.5px;text-align:right;padding-right:1.5px">112,11</div>
<div class="a td" style="left:695.0px;width:55.0px;top:263.5px;text-align:right;padding-right:1.5px">4 742 783,18</div>
<div class="a td" style="left:751.0px;width:44.0px;top:263.5px;text-align:right;padding-right:1.5px">6,0</div>
<div class="a td" style="left:183.0px;width:236.0px;top:273.5px;text-align:left;padding-left:1.5px">КОНДИТЕРСКИЕ ИЗДЕЛИЯ</div>
<div class="a td" style="left:420.0px;width:37.0px;top:273.5px;text-align:right;padding-right:1.5px">121</div>
<div class="a td" style="left:496.0px;width:36.0px;top:273.5px;text-align:left;padding-left:1.5px">шт</div>
<div class="a td" style="left:594.0px;width:55.0px;top:273.5px;text-align:right;padding-right:1.5px">96 875,318</div>
<div class="a td" style="left:650.0px;width:44.0px;top:273.5px;text-align:right;padding-right:1.5px">81,56</div>
<div class="a td" style="left:695.0px;width:55.0px;top:273.5px;text-align:right;padding-right:1.5px">7 901 209,34</div>
<div class="a td" style="left:751.0px;width:44.0px;top:273.5px;text-align:right;padding-right:1.5px">10,0</div>
<div class="a td" style="left:183.0px;width:236.0px;top:283.5px;text-align:left;padding-left:1.5px">КУЛИНАРИЯ</div>
<div class="a td" style="left:420.0px;width:37.0px;top:283.5px;text-align:right;padding-right:1.5px">90 354</div>
<div class="a td" style="left:496.0px;width:36.0px;top:283.5px;text-align:left;padding-left:1.5px">шт.</div>
<div class="a td" style="left:594.0px;width:55.0px;top:283.5px;text-align:right;padding-right:1.5px">18 615,400</div>
<div class="a td" style="left:650.0px;width:44.0px;top:283.5px;text-align:right;padding-right:1.5px">136,22</div>
<div class="a td" style="left:695.0px;width:55.0px;top:283.5px;text-align:right;padding-right:1.5px">2 617 188,14</div>
<div class="a td" style="left:751.0px;width:44.0px;top:283.5px;text-align:right;padding-right:1.5px">3,2</div>
<div class="a td" style="left:183.0px;width:236.0px;top:293.5px;text-align:left;padding-left:1.5px">МОЛОЧНЫЙ ГАСТРОНОМ</div>
<div class="a td" style="left:420.0px;width:37.0px;top:293.5px;text-align:right;padding-right:1.5px">219</div>
<div class="a td" style="left:496.0px;width:36.0px;top:293.5px;text-align:left;padding-left:1.5px">шт.</div>
<div class="a td" style="left:594.0px;width:55.0px;top:293.5px;text-align:right;padding-right:1.5px">87 465,962</div>
<div class="a td" style="left:650.0px;width:44.0px;top:293.5px;text-align:right;padding-right:1.5px">84,04</div>
<div class="a td" style="left:695.0px;width:55.0px;top:293.5px;text-align:right;padding-right:1.5px">7 360 364,64</div>
<div class="a td" style="left:751.0px;width:44.0px;top:293.5px;text-align:right;padding-right:1.5px">9,3</div>
<div class="a td" style="left:183.0px;width:236.0px;top:303.5px;text-align:left;padding-left:1.5px">МЯСНОЙ ГАСТРОНОМ</div>
<div class="a td" style="left:420.0px;width:37.0px;top:303.5px;text-align:right;padding-right:1.5px">12</div>
<div class="a td" style="left:496.0px;width:36.0px;top:303.5px;text-align:left;padding-left:1.5px">кг</div>
<div class="a td" style="left:594.0px;width:55.0px;top:303.5px;text-align:right;padding-right:1.5px">9 610,495</div>
<div class="a td" style="left:650.0px;width:44.0px;top:303.5px;text-align:right;padding-right:1.5px">209,75</div>
<div class="a td" style="left:695.0px;width:55.0px;top:303.5px;text-align:right;padding-right:1.5px">2 015 800,37</div>
<div class="a td" style="left:751.0px;width:44.0px;top:303.5px;text-align:right;padding-right:1.5px">2,6</div>
<div class="a td" style="left:183.0px;width:236.0px;top:313.5px;text-align:left;padding-left:1.5px">ОВОЩИ, ФРУКТЫ</div>
<div class="a td" style="left:420.0px;width:37.0px;top:313.5px;text-align:right;padding-right:1.5px">220</div>
<div class="a td" style="left:496.0px;width:36.0px;top:313.5px;text-align:left;padding-left:1.5px">шт.</div>
<div class="a td" style="left:594.0px;width:55.0px;top:313.5px;text-align:right;padding-right:1.5px">35 005,259</div>
<div class="a td" style="left:650.0px;width:44.0px;top:313.5px;text-align:right;padding-right:1.5px">85,24</div>
<div class="a td" style="left:695.0px;width:55.0px;top:313.5px;text-align:right;padding-right:1.5px">2 983 882,98</div>
<div class="a td" style="left:751.0px;width:44.0px;top:313.5px;text-align:right;padding-right:1.5px">3,8</div>
<div class="a td" style="left:183.0px;width:236.0px;top:323.5px;text-align:left;padding-left:1.5px">ОРЕХИ, СЕМЕЧКИ, СУХОФРУКТЫ</div>
<div class="a td" style="left:420.0px;width:37.0px;top:323.5px;text-align:right;padding-right:1.5px">93 523</div>
<div class="a td" style="left:496.0px;width:36.0px;top:323.5px;text-align:left;padding-left:1.5px">кг</div>
<div class="a td" style="left:594.0px;width:55.0px;top:323.5px;text-align:right;padding-right:1.5px">11 422,261</div>
<div class="a td" style="left:650.0px;width:44.0px;top:323.5px;text-align:right;padding-right:1.5px">107,88</div>
<div class="a td" style="left:695.0px;width:55.0px;top:323.5px;text-align:right;padding-right:1.5px">1 232 240,09</div>
<div class="a td" style="left:751.0px;width:44.0px;top:323.5px;text-align:right;padding-right:1.5px">1,6</div>
<div class="a td" style="left:183.0px;width:236.0px;top:333.5px;text-align:left;padding-left:1.5px">ПИВО БЕЗАЛКОГОЛЬНОЕ</div>
<div class="a td" style="left:420.0px;width:37.0px;top:333.5px;text-align:right;padding-right:1.5px">159 562</div>
<div class="a td" style="left:496.0px;width:36.0px;top:333.5px;text-align:left;padding-left:1.5px">шт.</div>
<div class="a td" style="left:594.0px;width:55.0px;top:333.5px;text-align:right;padding-right:1.5px">1 789,000</div>
<div class="a td" style="left:650.0px;width:44.0px;top:333.5px;text-align:right;padding-right:1.5px">74,37</div>
<div class="a td" style="left:695.0px;width:55.0px;top:333.5px;text-align:right;padding-right:1.5px">133 040,30</div>
<div class="a td" style="left:751.0px;width:44.0px;top:333.5px;text-align:right;padding-right:1.5px">0,2</div>
<div class="a td" style="left:183.0px;width:236.0px;top:343.5px;text-align:left;padding-left:1.5px">РЫБНЫЙ ГАСТРОНОМ</div>
<div class="a td" style="left:420.0px;width:37.0px;top:343.5px;text-align:right;padding-right:1.5px">15</div>
<div class="a td" style="left:496.0px;width:36.0px;top:343.5px;text-align:left;padding-left:1.5px">кг</div>
<div class="a td" style="left:594.0px;width:55.0px;top:343.5px;text-align:right;padding-right:1.5px">827,660</div>
<div class="a td" style="left:650.0px;width:44.0px;top:343.5px;text-align:right;padding-right:1.5px">155,32</div>
<div class="a td" style="left:695.0px;width:55.0px;top:343.5px;text-align:right;padding-right:1.5px">128 555,87</div>
<div class="a td" style="left:751.0px;width:44.0px;top:343.5px;text-align:right;padding-right:1.5px">0,2</div>
<div class="a td" style="left:183.0px;width:236.0px;top:353.5px;text-align:left;padding-left:1.5px">СЛАБОАЛКОГОЛЬНАЯ ПРОДУКЦИЯ</div>
<div class="a td" style="left:420.0px;width:37.0px;top:353.5px;text-align:right;padding-right:1.5px">324</div>
<div class="a td" style="left:496.0px;width:36.0px;top:353.5px;text-align:left;padding-left:1.5px">бут</div>
<div class="a td" style="left:594.0px;width:55.0px;top:353.5px;text-align:right;padding-right:1.5px">23 929,000</div>
<div class="a td" style="left:650.0px;width:44.0px;top:353.5px;text-align:right;padding-right:1.5px">106,36</div>
<div class="a td" style="left:695.0px;width:55.0px;top:353.5px;text-align:right;padding-right:1.5px">2 545 013,46</div>
<div class="a td" style="left:751.0px;width:44.0px;top:353.5px;text-align:right;padding-right:1.5px">3,2</div>
<div class="a td" style="left:183.0px;width:236.0px;top:363.5px;text-align:left;padding-left:1.5px">СОКИ, ВОДЫ</div>
<div class="a td" style="left:420.0px;width:37.0px;top:363.5px;text-align:right;padding-right:1.5px">90 353</div>
<div class="a td" style="left:496.0px;width:36.0px;top:363.5px;text-align:left;padding-left:1.5px">бут</div>
<div class="a td" style="left:594.0px;width:55.0px;top:363.5px;text-align:right;padding-right:1.5px">126 473,000</div>
<div class="a td" style="left:650.0px;width:44.0px;top:363.5px;text-align:right;padding-right:1.5px">84,60</div>
<div class="a td" style="left:695.0px;width:55.0px;top:363.5px;text-align:right;padding-right:1.5px">10 699 080,10</div>
<div class="a td" style="left:751.0px;width:44.0px;top:363.5px;text-align:right;padding-right:1.5px">13,6</div>
<div class="a td" style="left:183.0px;width:236.0px;top:373.5px;text-align:left;padding-left:1.5px">СОПУТСТВУЮЩИЕ ТОВАРЫ</div>
<div class="a td" style="left:420.0px;width:37.0px;top:373.5px;text-align:right;padding-right:1.5px">325</div>
<div class="a td" style="left:496.0px;width:36.0px;top:373.5px;text-align:left;padding-left:1.5px">шт.</div>
<div class="a td" style="left:594.0px;width:55.0px;top:373.5px;text-align:right;padding-right:1.5px">25 709,000</div>
<div class="a td" style="left:650.0px;width:44.0px;top:373.5px;text-align:right;padding-right:1.5px">74,49</div>
<div class="a td" style="left:695.0px;width:55.0px;top:373.5px;text-align:right;padding-right:1.5px">1 915 159,50</div>
<div class="a td" style="left:751.0px;width:44.0px;top:373.5px;text-align:right;padding-right:1.5px">2,4</div>
<div class="a td" style="left:183.0px;width:236.0px;top:383.5px;text-align:left;padding-left:1.5px">ТАБАЧНЫЕ ИЗДЕЛИЯ И АКСЕССУАРЫ</div>
<div class="a td" style="left:420.0px;width:37.0px;top:383.5px;text-align:right;padding-right:1.5px">326</div>
<div class="a td" style="left:496.0px;width:36.0px;top:383.5px;text-align:left;padding-left:1.5px">шт.</div>
<div class="a td" style="left:594.0px;width:55.0px;top:383.5px;text-align:right;padding-right:1.5px">56 901,000</div>
<div class="a td" style="left:650.0px;width:44.0px;top:383.5px;text-align:right;padding-right:1.5px">182,58</div>
<div class="a td" style="left:695.0px;width:55.0px;top:383.5px;text-align:right;padding-right:1.5px">10 388 946,60</div>
<div class="a td" style="left:751.0px;width:44.0px;top:383.5px;text-align:right;padding-right:1.5px">13,2</div>
<div class="a td" style="left:183.0px;width:236.0px;top:393.5px;text-align:left;padding-left:1.5px">ТАРА</div>
<div class="a td" style="left:420.0px;width:37.0px;top:393.5px;text-align:right;padding-right:1.5px">8</div>
<div class="a td" style="left:496.0px;width:36.0px;top:393.5px;text-align:left;padding-left:1.5px">шт.</div>
<div class="a td" style="left:594.0px;width:55.0px;top:393.5px;text-align:right;padding-right:1.5px">39 566,000</div>
<div class="a td" style="left:650.0px;width:44.0px;top:393.5px;text-align:right;padding-right:1.5px">7,28</div>
<div class="a td" style="left:695.0px;width:55.0px;top:393.5px;text-align:right;padding-right:1.5px">288 147,70</div>
<div class="a td" style="left:751.0px;width:44.0px;top:393.5px;text-align:right;padding-right:1.5px">0,4</div>
<div class="a td" style="left:183.0px;width:236.0px;top:403.5px;text-align:left;padding-left:1.5px">ТОВАРЫ ДЛЯ ЖИВОТНЫХ</div>
<div class="a td" style="left:420.0px;width:37.0px;top:403.5px;text-align:right;padding-right:1.5px">323</div>
<div class="a td" style="left:496.0px;width:36.0px;top:403.5px;text-align:left;padding-left:1.5px">шт.</div>
<div class="a td" style="left:594.0px;width:55.0px;top:403.5px;text-align:right;padding-right:1.5px">19 016,000</div>
<div class="a td" style="left:650.0px;width:44.0px;top:403.5px;text-align:right;padding-right:1.5px">82,44</div>
<div class="a td" style="left:695.0px;width:55.0px;top:403.5px;text-align:right;padding-right:1.5px">1 567 674,99</div>
<div class="a td" style="left:751.0px;width:44.0px;top:403.5px;text-align:right;padding-right:1.5px">2,0</div>
<div class="a td" style="left:183.0px;width:236.0px;top:413.5px;text-align:left;padding-left:1.5px">ХЛЕБ И ХЛЕБОБУЛОЧНАЯ ПРОДУКЦИЯ</div>
<div class="a td" style="left:420.0px;width:37.0px;top:413.5px;text-align:right;padding-right:1.5px">123</div>
<div class="a td" style="left:496.0px;width:36.0px;top:413.5px;text-align:left;padding-left:1.5px">шт.</div>
<div class="a td" style="left:594.0px;width:55.0px;top:413.5px;text-align:right;padding-right:1.5px">110 388,000</div>
<div class="a td" style="left:650.0px;width:44.0px;top:413.5px;text-align:right;padding-right:1.5px">46,72</div>
<div class="a td" style="left:695.0px;width:55.0px;top:413.5px;text-align:right;padding-right:1.5px">5 157 344,50</div>
<div class="a td" style="left:751.0px;width:44.0px;top:413.5px;text-align:right;padding-right:1.5px">6,6</div>
<div class="a td" style="left:183.0px;width:236.0px;top:423.5px;text-align:left;padding-left:1.5px">ЯЙЦО КУРИНОЕ, ПЕРЕПЕЛИНОЕ</div>
<div class="a td" style="left:420.0px;width:37.0px;top:423.5px;text-align:right;padding-right:1.5px">16</div>
<div class="a td" style="left:496.0px;width:36.0px;top:423.5px;text-align:left;padding-left:1.5px">шт.</div>
<div class="a td" style="left:594.0px;width:55.0px;top:423.5px;text-align:right;padding-right:1.5px">8 367,000</div>
<div class="a td" style="left:650.0px;width:44.0px;top:423.5px;text-align:right;padding-right:1.5px">91,33</div>
<div class="a td" style="left:695.0px;width:55.0px;top:423.5px;text-align:right;padding-right:1.5px">764 189,30</div>
<div class="a td" style="left:751.0px;width:44.0px;top:423.5px;text-align:right;padding-right:1.5px">1,0</div>
<div class="a" style="left:182.0px;top:438.0px;width:614.0px;height:2px;background:#111"></div>
<div class="a td" style="left:380px;width:39px;top:439.5px;text-align:right">Итого:</div>
<div class="a td" style="left:594px;width:54.5px;top:439.5px;text-align:right;padding-right:1.5px">874 697,447</div>
<div class="a td" style="left:695px;width:54.5px;top:439.5px;text-align:right;padding-right:1.5px">78 676 691,29</div>
<div class="a td" style="left:751px;width:43.5px;top:439.5px;text-align:right;padding-right:1.5px">100,0</div>
<style>.pl{text-align:center;font-size:7.5px;line-height:10px;color:#202020;white-space:nowrap}.lg{font-size:7.55px;line-height:8.35px;color:#333;white-space:nowrap}</style>
<div class="a" style="left:183px;top:107px;width:1087px;height:578px;overflow:hidden">
<div class="a" style="left:-183px;top:-107px;width:1280px;height:720px">
<svg class="a" style="left:183px;top:107px" width="1087" height="578" viewBox="183 107 1087 578">
<defs><clipPath id="etop"><ellipse cx="443" cy="639.6" rx="70" ry="59.6"/></clipPath></defs>
<path d="M593.26,710.20 L590.21,714.52 L586.99,718.75 L583.60,722.88 L580.04,726.92 L576.33,730.84 L572.46,734.66 L568.45,738.37 L564.28,741.95 L559.97,745.41 L555.53,748.74 L550.96,751.95 L546.26,755.01 L541.44,757.94 L536.50,760.73 L531.46,763.38 L526.31,765.87 L521.07,768.21 L515.73,770.41 L510.31,772.44 L504.81,774.32 L499.24,776.03 L493.61,777.58 L487.91,778.97 L482.16,780.19 L476.37,781.24 L476.37,801.24 L482.16,800.19 L487.91,798.97 L493.61,797.58 L499.24,796.03 L504.81,794.32 L510.31,792.44 L515.73,790.41 L521.07,788.21 L526.31,785.87 L531.46,783.38 L536.50,780.73 L541.44,777.94 L546.26,775.01 L550.96,771.95 L555.53,768.74 L559.97,765.41 L564.28,761.95 L568.45,758.37 L572.46,754.66 L576.33,750.84 L580.04,746.92 L583.60,742.88 L586.99,738.75 L590.21,734.52 L593.26,730.20Z" fill="#192e4b"/>
<path d="M476.37,781.24 L470.47,782.14 L464.54,782.86 L458.59,783.40 L452.61,783.77 L446.63,783.97 L440.64,783.99 L434.65,783.83 L428.68,783.50 L422.72,782.99 L416.78,782.31 L410.88,781.45 L405.01,780.42 L399.19,779.22 L393.42,777.85 L387.71,776.31 L382.07,774.60 L376.50,772.73 L371.01,770.69 L365.60,768.50 L360.29,766.15 L355.07,763.64 L349.96,760.98 L344.96,758.18 L340.08,755.23 L340.08,775.23 L344.96,778.18 L349.96,780.98 L355.07,783.64 L360.29,786.15 L365.60,788.50 L371.01,790.69 L376.50,792.73 L382.07,794.60 L387.71,796.31 L393.42,797.85 L399.19,799.22 L405.01,800.42 L410.88,801.45 L416.78,802.31 L422.72,802.99 L428.68,803.50 L434.65,803.83 L440.64,803.99 L446.63,803.97 L452.61,803.77 L458.59,803.40 L464.54,802.86 L470.47,802.14 L476.37,801.24Z" fill="#553a15"/>
<path d="M340.08,755.23 L335.40,752.19 L330.84,749.01 L326.41,745.71 L322.12,742.28 L317.96,738.73 L313.95,735.06 L310.09,731.27 L306.38,727.38 L302.83,723.38 L299.44,719.28 L296.21,715.09 L293.16,710.81 L290.28,706.44 L287.57,701.99 L285.04,697.46 L282.70,692.86 L280.54,688.20 L278.56,683.48 L276.78,678.70 L275.19,673.88 L273.79,669.01 L272.58,664.11 L272.58,684.11 L273.79,689.01 L275.19,693.88 L276.78,698.70 L278.56,703.48 L280.54,708.20 L282.70,712.86 L285.04,717.46 L287.57,721.99 L290.28,726.44 L293.16,730.81 L296.21,735.09 L299.44,739.28 L302.83,743.38 L306.38,747.38 L310.09,751.27 L313.95,755.06 L317.96,758.73 L322.12,762.28 L326.41,765.71 L330.84,769.01 L335.40,772.19 L340.08,775.23Z" fill="#4f1704"/>
<path d="M272.58,664.11 L271.64,659.53 L270.87,654.93 L270.27,650.31 L269.84,645.68 L269.59,641.04 L269.50,636.40 L269.50,656.40 L269.59,661.04 L269.84,665.68 L270.27,670.31 L270.87,674.93 L271.64,679.53 L272.58,684.11Z" fill="#052138"/>
<path d="M616.50,636.40 L616.42,640.85 L616.18,645.30 L615.79,649.74 L615.79,669.74 L616.18,665.30 L616.42,660.85 L616.50,656.40Z" fill="#543e39"/>
<path d="M615.79,649.74 L615.21,654.34 L614.47,658.93 L613.55,663.50 L612.47,668.04 L612.47,688.04 L613.55,683.50 L614.47,678.93 L615.21,674.34 L615.79,669.74Z" fill="#4f2f04"/>
<path d="M612.47,668.04 L611.13,672.85 L609.60,677.61 L607.88,682.33 L607.88,702.33 L609.60,697.61 L611.13,692.85 L612.47,688.04Z" fill="#273246"/>
<path d="M607.88,682.33 L606.11,686.71 L604.17,691.04 L604.17,711.04 L606.11,706.71 L607.88,702.33Z" fill="#192f4e"/>
<path d="M604.17,691.04 L602.72,694.04 L601.20,697.01 L601.20,717.01 L602.72,714.04 L604.17,711.04Z" fill="#553a16"/>
<path d="M601.20,697.01 L599.83,699.54 L598.40,702.04 L598.40,722.04 L599.83,719.54 L601.20,717.01Z" fill="#4b1606"/>
<path d="M598.40,702.04 L596.42,705.33 L596.42,725.33 L598.40,722.04Z" fill="#092535"/>
<path d="M596.42,705.33 L595.39,706.97 L595.39,726.97 L596.42,725.33Z" fill="#444444"/>
<path d="M595.39,706.97 L594.33,708.59 L594.33,728.59 L595.39,726.97Z" fill="#0a1525"/>
<path d="M594.33,708.59 L593.26,710.20 L593.26,730.20 L594.33,728.59Z" fill="#574e2e"/>
<path d="M593.26,710.20 L590.21,714.52 L586.99,718.75 L583.60,722.88 L580.04,726.92 L576.33,730.84 L572.46,734.66 L568.45,738.37 L564.28,741.95 L559.97,745.41 L555.53,748.74 L550.96,751.95 L546.26,755.01 L541.44,757.94 L536.50,760.73 L531.46,763.38 L526.31,765.87 L521.07,768.21 L515.73,770.41 L510.31,772.44 L504.81,774.32 L499.24,776.03 L493.61,777.58 L487.91,778.97 L482.16,780.19 L476.37,781.24 L456.46,698.09 L458.80,697.66 L461.12,697.17 L463.42,696.61 L465.69,695.98 L467.94,695.29 L470.16,694.53 L472.34,693.71 L474.50,692.83 L476.61,691.88 L478.69,690.87 L480.72,689.80 L482.72,688.68 L484.66,687.50 L486.56,686.26 L488.40,684.96 L490.19,683.62 L491.93,682.22 L493.61,680.77 L495.23,679.28 L496.79,677.74 L498.29,676.15 L499.72,674.52 L501.09,672.85 L502.39,671.14 L503.62,669.40Z" fill="#4a86d8"/>
<path d="M476.37,781.24 L470.47,782.14 L464.54,782.86 L458.59,783.40 L452.61,783.77 L446.63,783.97 L440.64,783.99 L434.65,783.83 L428.68,783.50 L422.72,782.99 L416.78,782.31 L410.88,781.45 L405.01,780.42 L399.19,779.22 L393.42,777.85 L387.71,776.31 L382.07,774.60 L376.50,772.73 L371.01,770.69 L365.60,768.50 L360.29,766.15 L355.07,763.64 L349.96,760.98 L344.96,758.18 L340.08,755.23 L401.48,687.58 L403.45,688.77 L405.46,689.91 L407.53,690.98 L409.63,691.99 L411.77,692.94 L413.95,693.83 L416.17,694.65 L418.42,695.40 L420.69,696.09 L423.00,696.72 L425.33,697.27 L427.67,697.75 L430.04,698.17 L432.42,698.52 L434.82,698.79 L437.22,699.00 L439.63,699.13 L442.05,699.19 L444.46,699.19 L446.88,699.11 L449.29,698.96 L451.69,698.74 L454.08,698.45 L456.46,698.09Z" fill="#f5a63c"/>
<path d="M340.08,755.23 L335.40,752.19 L330.84,749.01 L326.41,745.71 L322.12,742.28 L317.96,738.73 L313.95,735.06 L310.09,731.27 L306.38,727.38 L302.83,723.38 L299.44,719.28 L296.21,715.09 L293.16,710.81 L290.28,706.44 L287.57,701.99 L285.04,697.46 L282.70,692.86 L280.54,688.20 L278.56,683.48 L276.78,678.70 L275.19,673.88 L273.79,669.01 L272.58,664.11 L374.24,650.79 L374.73,652.77 L375.29,654.73 L375.94,656.68 L376.66,658.61 L377.45,660.52 L378.32,662.40 L379.27,664.26 L380.29,666.08 L381.38,667.88 L382.55,669.65 L383.78,671.38 L385.08,673.07 L386.45,674.72 L387.88,676.34 L389.38,677.91 L390.93,679.44 L392.55,680.92 L394.23,682.35 L395.96,683.74 L397.75,685.07 L399.59,686.35 L401.48,687.58Z" fill="#e2440c"/>
<path d="M272.58,664.11 L271.55,659.03 L270.73,653.94 L270.11,648.82 L269.71,643.68 L269.52,638.54 L269.54,633.39 L269.76,628.25 L270.20,623.11 L270.85,618.00 L271.71,612.90 L272.78,607.84 L274.05,602.80 L275.53,597.81 L277.22,592.87 L279.10,587.98 L281.19,583.15 L283.47,578.38 L285.94,573.68 L379.63,614.28 L378.63,616.17 L377.71,618.10 L376.87,620.05 L376.11,622.02 L375.43,624.02 L374.84,626.03 L374.32,628.07 L373.89,630.11 L373.55,632.17 L373.28,634.23 L373.11,636.31 L373.01,638.38 L373.01,640.46 L373.09,642.54 L373.25,644.61 L373.50,646.68 L373.83,648.74 L374.24,650.79Z" fill="#1061a0"/>
<path d="M285.94,573.68 L288.57,569.13 L291.37,564.66 L294.36,560.28 L297.51,555.98 L300.85,551.78 L304.34,547.68 L308.01,543.68 L311.83,539.79 L315.80,536.02 L319.93,532.36 L324.20,528.83 L328.61,525.42 L333.16,522.15 L337.83,519.01 L342.63,516.00 L347.55,513.14 L352.58,510.43 L406.52,588.73 L404.49,589.83 L402.51,590.98 L400.57,592.20 L398.68,593.46 L396.85,594.79 L395.07,596.16 L393.35,597.59 L391.68,599.07 L390.08,600.59 L388.54,602.16 L387.06,603.77 L385.65,605.43 L384.30,607.13 L383.03,608.86 L381.82,610.63 L380.69,612.44 L379.63,614.28Z" fill="#c3c3c3"/>
<path d="M352.58,510.43 L357.54,507.95 L362.60,505.60 L367.74,503.41 L372.97,501.36 L378.28,499.46 L383.65,497.70 L389.09,496.11 L394.59,494.66 L400.15,493.37 L405.75,492.24 L411.39,491.27 L417.06,490.46 L422.77,489.81 L428.50,489.32 L437.15,580.21 L434.84,580.41 L432.54,580.67 L430.25,581.00 L427.97,581.39 L425.71,581.85 L423.47,582.37 L421.25,582.95 L419.06,583.60 L416.89,584.30 L414.75,585.07 L412.64,585.90 L410.56,586.79 L408.52,587.73 L406.52,588.73Z" fill="#1d3c6c"/>
<path d="M428.50,489.32 L434.47,488.98 L440.46,488.82 L446.45,488.83 L452.43,489.02 L458.41,489.38 L464.36,489.92 L470.29,490.64 L476.19,491.53 L482.05,492.59 L487.86,493.82 L493.62,495.22 L499.32,496.79 L465.72,583.23 L463.42,582.59 L461.10,582.03 L458.75,581.53 L456.39,581.10 L454.01,580.74 L451.62,580.45 L449.22,580.24 L446.81,580.09 L444.39,580.01 L441.97,580.01 L439.56,580.07 L437.15,580.21Z" fill="#fae086"/>
<path d="M499.32,496.79 L504.90,498.51 L510.41,500.40 L515.85,502.44 L521.19,504.64 L526.45,506.99 L531.61,509.50 L536.66,512.16 L541.61,514.96 L546.44,517.90 L551.14,520.98 L555.72,524.20 L488.48,594.29 L486.63,592.99 L484.73,591.75 L482.78,590.56 L480.79,589.43 L478.75,588.36 L476.67,587.35 L474.55,586.40 L472.39,585.51 L470.20,584.68 L467.97,583.92 L465.72,583.23Z" fill="#2a9fda"/>
<path d="M555.72,524.20 L560.15,527.53 L564.44,530.99 L568.59,534.57 L572.60,538.27 L576.45,542.08 L580.15,546.00 L583.69,550.03 L499.76,604.72 L498.34,603.10 L496.84,601.51 L495.29,599.97 L493.67,598.48 L492.00,597.04 L490.27,595.64 L488.48,594.29Z" fill="#d4663c"/>
<path d="M583.69,550.03 L587.01,554.09 L590.17,558.23 L593.16,562.47 L595.99,566.78 L598.64,571.18 L601.12,575.65 L506.80,615.07 L505.80,613.26 L504.72,611.49 L503.59,609.75 L502.38,608.04 L501.10,606.36 L499.76,604.72Z" fill="#0a5cdc"/>
<path d="M601.12,575.65 L603.42,580.18 L605.54,584.78 L607.48,589.44 L609.24,594.15 L610.81,598.91 L612.19,603.71 L511.26,626.40 L510.70,624.46 L510.07,622.54 L509.36,620.64 L508.58,618.76 L507.72,616.90 L506.80,615.07Z" fill="#f2d08a"/>
<path d="M612.19,603.71 L613.35,608.42 L614.34,613.17 L615.14,617.93 L615.75,622.72 L616.19,627.53 L512.87,636.02 L512.70,634.08 L512.45,632.14 L512.13,630.22 L511.73,628.30 L511.26,626.40Z" fill="#4c5d82"/>
<path d="M616.19,627.53 L616.42,631.97 L616.50,636.42 L616.42,640.86 L616.18,645.30 L615.79,649.74 L512.71,644.99 L512.87,643.20 L512.97,641.40 L513.00,639.61 L512.97,637.81 L512.87,636.02Z" fill="#f2b4a4"/>
<path d="M615.79,649.74 L615.21,654.34 L614.47,658.93 L613.55,663.50 L612.47,668.04 L511.37,652.38 L511.81,650.54 L512.18,648.70 L512.48,646.85 L512.71,644.99Z" fill="#e2880e"/>
<path d="M612.47,668.04 L611.13,672.85 L609.60,677.61 L607.88,682.33 L509.52,658.15 L510.22,656.24 L510.83,654.32 L511.37,652.38Z" fill="#7090c8"/>
<path d="M607.88,682.33 L606.11,686.71 L604.17,691.04 L508.03,661.66 L508.81,659.92 L509.52,658.15Z" fill="#4a88e0"/>
<path d="M604.17,691.04 L602.72,694.04 L601.20,697.01 L506.83,664.07 L507.44,662.88 L508.03,661.66Z" fill="#f5a640"/>
<path d="M601.20,697.01 L599.83,699.54 L598.40,702.04 L505.70,666.10 L506.27,665.09 L506.83,664.07Z" fill="#d84012"/>
<path d="M598.40,702.04 L596.42,705.33 L504.90,667.44 L505.70,666.10Z" fill="#1a6a9a"/>
<path d="M596.42,705.33 L595.39,706.97 L504.48,668.09 L504.90,667.44Z" fill="#c3c3c3"/>
<path d="M595.39,706.97 L594.33,708.59 L504.06,668.75 L504.48,668.09Z" fill="#1d3c6c"/>
<path d="M594.33,708.59 L593.26,710.20 L503.62,669.40 L504.06,668.75Z" fill="#fae086"/>
<path d="M373.00,639.60 L373.04,637.59 L373.16,635.58 L373.36,633.57 L373.64,631.58 L373.99,629.59 L374.43,627.61 L374.95,625.65 L375.54,623.70 L376.21,621.77 L376.95,619.86 L377.77,617.97 L378.67,616.11 L379.63,614.28 L379.63,632.28 L378.67,634.11 L377.77,635.97 L376.95,637.86 L376.21,639.77 L375.54,641.70 L374.95,643.65 L374.43,645.61 L373.99,647.59 L373.64,649.58 L373.36,651.57 L373.16,653.58 L373.04,655.59 L373.00,657.60Z" fill="#0d5186"/>
<path d="M379.63,614.28 L380.69,612.44 L381.82,610.63 L383.03,608.86 L384.30,607.13 L385.65,605.43 L387.06,603.77 L388.54,602.16 L390.08,600.59 L391.68,599.07 L393.35,597.59 L395.07,596.16 L396.85,594.79 L398.68,593.46 L400.57,592.20 L402.51,590.98 L404.49,589.83 L406.52,588.73 L406.52,606.73 L404.49,607.83 L402.51,608.98 L400.57,610.20 L398.68,611.46 L396.85,612.79 L395.07,614.16 L393.35,615.59 L391.68,617.07 L390.08,618.59 L388.54,620.16 L387.06,621.77 L385.65,623.43 L384.30,625.13 L383.03,626.86 L381.82,628.63 L380.69,630.44 L379.63,632.28Z" fill="#a3a3a3"/>
<path d="M406.52,588.73 L408.52,587.73 L410.56,586.79 L412.64,585.90 L414.75,585.07 L416.89,584.30 L419.06,583.60 L421.25,582.95 L423.47,582.37 L425.71,581.85 L427.97,581.39 L430.25,581.00 L432.54,580.67 L434.84,580.41 L437.15,580.21 L437.15,598.21 L434.84,598.41 L432.54,598.67 L430.25,599.00 L427.97,599.39 L425.71,599.85 L423.47,600.37 L421.25,600.95 L419.06,601.60 L416.89,602.30 L414.75,603.07 L412.64,603.90 L410.56,604.79 L408.52,605.73 L406.52,606.73Z" fill="#18325a"/>
<path d="M437.15,580.21 L439.56,580.07 L441.97,580.01 L444.39,580.01 L446.81,580.09 L449.22,580.24 L451.62,580.45 L454.01,580.74 L456.39,581.10 L458.75,581.53 L461.10,582.03 L463.42,582.59 L465.72,583.23 L465.72,601.23 L463.42,600.59 L461.10,600.03 L458.75,599.53 L456.39,599.10 L454.01,598.74 L451.62,598.45 L449.22,598.24 L446.81,598.09 L444.39,598.01 L441.97,598.01 L439.56,598.07 L437.15,598.21Z" fill="#d2bc70"/>
<path d="M465.72,583.23 L467.97,583.92 L470.20,584.68 L472.39,585.51 L474.55,586.40 L476.67,587.35 L478.75,588.36 L480.79,589.43 L482.78,590.56 L484.73,591.75 L486.63,592.99 L488.48,594.29 L488.48,612.29 L486.63,610.99 L484.73,609.75 L482.78,608.56 L480.79,607.43 L478.75,606.36 L476.67,605.35 L474.55,604.40 L472.39,603.51 L470.20,602.68 L467.97,601.92 L465.72,601.23Z" fill="#2385b7"/>
<path d="M488.48,594.29 L490.27,595.64 L492.00,597.04 L493.67,598.48 L495.29,599.97 L496.84,601.51 L498.34,603.10 L499.76,604.72 L499.76,622.72 L498.34,621.10 L496.84,619.51 L495.29,617.97 L493.67,616.48 L492.00,615.04 L490.27,613.64 L488.48,612.29Z" fill="#b25532"/>
<path d="M499.76,604.72 L501.10,606.36 L502.38,608.04 L503.59,609.75 L504.72,611.49 L505.80,613.26 L506.80,615.07 L506.80,633.07 L505.80,631.26 L504.72,629.49 L503.59,627.75 L502.38,626.04 L501.10,624.36 L499.76,622.72Z" fill="#084db8"/>
<path d="M506.80,615.07 L507.72,616.90 L508.58,618.76 L509.36,620.64 L510.07,622.54 L510.70,624.46 L511.26,626.40 L511.26,644.40 L510.70,642.46 L510.07,640.54 L509.36,638.64 L508.58,636.76 L507.72,634.90 L506.80,633.07Z" fill="#cbae73"/>
<path d="M511.26,626.40 L511.73,628.30 L512.13,630.22 L512.45,632.14 L512.70,634.08 L512.87,636.02 L512.87,654.02 L512.70,652.08 L512.45,650.14 L512.13,648.22 L511.73,646.30 L511.26,644.40Z" fill="#3f4e6d"/>
<path d="M512.87,636.02 L512.97,637.81 L513.00,639.60 L513.00,657.60 L512.97,655.81 L512.87,654.02Z" fill="#cb9789"/>
<g clip-path="url(#etop)"><ellipse cx="443" cy="657.6" rx="70" ry="59.6" fill="#fff"/></g>
</svg>
<div class="a pl" style="left:362.6px;top:718.8px;width:300px">СОКИ, ВОДЫ (13,6%)</div>
<div class="a pl" style="left:266.8px;top:735.7px;width:300px">ТАБАЧНЫЕ ИЗДЕЛИЯ И АКСЕССУАРЫ (13,2%)</div>
<div class="a pl" style="left:191.7px;top:689.5px;width:300px">БАКАЛЕЯ (11,9%)</div>
<div class="a pl" style="left:174.2px;top:620.9px;width:300px">КОНДИТЕРСКИЕ ИЗДЕЛИЯ (10,0%)</div>
<div class="a pl" style="left:203.9px;top:564.3px;width:300px">МОЛОЧНЫЙ ГАСТРОНОМ (9,3%)</div>
<div class="a pl" style="left:255.8px;top:534.7px;width:300px">АЛКОГОЛЬ (7,4%)</div>
<div class="a pl" style="left:307.7px;top:530.4px;width:300px">ХЛЕБ И ХЛЕБОБУЛОЧНАЯ ПРОДУКЦИЯ (6,6%)</div>
<div class="a pl" style="left:352.4px;top:543.3px;width:300px">ЗАМОРОЗКА (6,0%)</div>
<div class="a pl" style="left:381.1px;top:563.2px;width:300px">ОВОЩИ, ФРУКТЫ (3,8%)</div>
<div class="a pl" style="left:396.6px;top:581.6px;width:300px">СЛАБОАЛКОГОЛЬНАЯ ПРОДУКЦИЯ (3,2%)</div>
<div class="a pl" style="left:406.5px;top:600.7px;width:300px">КУЛИНАРИЯ (3,2%)</div>
<div class="a pl" style="left:411.5px;top:619.2px;width:300px">МЯСНОЙ ГАСТРОНОМ (2,6%)</div>
<div class="a pl" style="left:412.7px;top:635.5px;width:300px">СОПУТСТВУЮЩИЕ ТОВАРЫ (2,4%)</div>
<div class="a pl" style="left:411.3px;top:649.8px;width:300px">ТОВАРЫ ДЛЯ ЖИВОТНЫХ (2,0%)</div>
<div class="a pl" style="left:408.5px;top:661.4px;width:300px">ОРЕХИ, СЕМЕЧКИ, СУХОФРУКТЫ (1,6%)</div>
<div class="a pl" style="left:405.5px;top:669.5px;width:300px">ЯЙЦО КУРИНОЕ, ПЕРЕПЕЛИНОЕ (1,0%)</div>
<div class="a pl" style="left:403.2px;top:674.6px;width:300px">!!! МОН'ДЭЛИС (0,7%)</div>
<div class="a pl" style="left:401.2px;top:678.5px;width:300px">ДЕТСКОЕ ПИТАНИЕ (0,6%)</div>
<div class="a pl" style="left:399.6px;top:681.5px;width:300px">ТАРА (0,4%)</div>
<div class="a pl" style="left:398.5px;top:683.2px;width:300px">ДИЕТИЧЕСКИЕ И СОЕВЫЕ ПРОДУКТЫ (0,2%)</div>
<div class="a pl" style="left:397.8px;top:684.4px;width:300px">ПИВО БЕЗАЛКОГОЛЬНОЕ (0,2%)</div>
<div class="a pl" style="left:397.0px;top:685.5px;width:300px">РЫБНЫЙ ГАСТРОНОМ (0,2%)</div>
<div class="a" style="left:709px;top:475.0px;width:14px;height:5.5px;background:#4a86d8"></div>
<div class="a lg" style="left:727px;top:474.1px">СОКИ, ВОДЫ (13,6%)</div>
<div class="a" style="left:709px;top:488.4px;width:14px;height:5.5px;background:#f5a63c"></div>
<div class="a lg" style="left:727px;top:483.4px">ТАБАЧНЫЕ ИЗДЕЛИЯ И АКСЕССУАРЫ<br>(13,2%)</div>
<div class="a" style="left:709px;top:501.9px;width:14px;height:5.5px;background:#e2440c"></div>
<div class="a lg" style="left:727px;top:501.0px">БАКАЛЕЯ (11,9%)</div>
<div class="a" style="left:709px;top:511.1px;width:14px;height:5.5px;background:#1061a0"></div>
<div class="a lg" style="left:727px;top:510.2px">КОНДИТЕРСКИЕ ИЗДЕЛИЯ (10,0%)</div>
<div class="a" style="left:709px;top:520.4px;width:14px;height:5.5px;background:#c3c3c3"></div>
<div class="a lg" style="left:727px;top:519.5px">МОЛОЧНЫЙ ГАСТРОНОМ (9,3%)</div>
<div class="a" style="left:709px;top:529.6px;width:14px;height:5.5px;background:#1d3c6c"></div>
<div class="a lg" style="left:727px;top:528.7px">АЛКОГОЛЬ (7,4%)</div>
<div class="a" style="left:709px;top:543.1px;width:14px;height:5.5px;background:#fae086"></div>
<div class="a lg" style="left:727px;top:538.0px">ХЛЕБ И ХЛЕБОБУЛОЧНАЯ ПРОДУКЦИЯ<br>(6,6%)</div>
<div class="a" style="left:709px;top:556.5px;width:14px;height:5.5px;background:#2a9fda"></div>
<div class="a lg" style="left:727px;top:555.6px">ЗАМОРОЗКА (6,0%)</div>
<div class="a" style="left:709px;top:565.7px;width:14px;height:5.5px;background:#d4663c"></div>
<div class="a lg" style="left:727px;top:564.8px">ОВОЩИ, ФРУКТЫ (3,8%)</div>
<div class="a" style="left:709px;top:579.2px;width:14px;height:5.5px;background:#0a5cdc"></div>
<div class="a lg" style="left:727px;top:574.1px">СЛАБОАЛКОГОЛЬНАЯ ПРОДУКЦИЯ<br>(3,2%)</div>
<div class="a" style="left:709px;top:592.6px;width:14px;height:5.5px;background:#f2d08a"></div>
<div class="a lg" style="left:727px;top:591.7px">КУЛИНАРИЯ (3,2%)</div>
<div class="a" style="left:709px;top:601.8px;width:14px;height:5.5px;background:#4c5d82"></div>
<div class="a lg" style="left:727px;top:600.9px">МЯСНОЙ ГАСТРОНОМ (2,6%)</div>
<div class="a" style="left:709px;top:611.1px;width:14px;height:5.5px;background:#f2b4a4"></div>
<div class="a lg" style="left:727px;top:610.2px">СОПУТСТВУЮЩИЕ ТОВАРЫ (2,4%)</div>
<div class="a" style="left:709px;top:620.3px;width:14px;height:5.5px;background:#e2880e"></div>
<div class="a lg" style="left:727px;top:619.4px">ТОВАРЫ ДЛЯ ЖИВОТНЫХ (2,0%)</div>
<div class="a" style="left:709px;top:633.8px;width:14px;height:5.5px;background:#7090c8"></div>
<div class="a lg" style="left:727px;top:628.7px">ОРЕХИ, СЕМЕЧКИ, СУХОФРУКТЫ<br>(1,6%)</div>
<div class="a" style="left:709px;top:651.4px;width:14px;height:5.5px;background:#4a88e0"></div>
<div class="a lg" style="left:727px;top:646.3px">ЯЙЦО КУРИНОЕ, ПЕРЕПЕЛИНОЕ<br>(1,0%)</div>
<div class="a" style="left:709px;top:664.8px;width:14px;height:5.5px;background:#f5a640"></div>
<div class="a lg" style="left:727px;top:663.9px">!!! МОН'ДЭЛИС (0,7%)</div>
<div class="a" style="left:709px;top:674.0px;width:14px;height:5.5px;background:#d84012"></div>
<div class="a lg" style="left:727px;top:673.1px">ДЕТСКОЕ ПИТАНИЕ (0,6%)</div>
<div class="a" style="left:709px;top:683.3px;width:14px;height:5.5px;background:#1a6a9a"></div>
<div class="a lg" style="left:727px;top:682.4px">ТАРА (0,4%)</div>
<div class="a" style="left:709px;top:692.5px;width:14px;height:5.5px;background:#c3c3c3"></div>
<div class="a lg" style="left:727px;top:691.6px">ДИЕТИЧЕСКИЕ И СОЕВЫЕ ПРОДУКТЫ (0,2%)</div>
<div class="a" style="left:709px;top:701.8px;width:14px;height:5.5px;background:#1d3c6c"></div>
<div class="a lg" style="left:727px;top:700.9px">ПИВО БЕЗАЛКОГОЛЬНОЕ (0,2%)</div>
<div class="a" style="left:709px;top:711.0px;width:14px;height:5.5px;background:#fae086"></div>
<div class="a lg" style="left:727px;top:710.1px">РЫБНЫЙ ГАСТРОНОМ (0,2%)</div>
</div></div>
<div class="a" style="left:1271px;top:90px;width:9px;height:603px;background:#ececec;border-left:1px solid #e0e0e0"></div>
<svg class="a" style="left:1273px;top:94px" width="7" height="5" viewBox="0 0 7 5"><path d="M0.5 4.5 L3.5 1 L6.5 4.5Z" fill="#333"/></svg>
<div class="a" style="left:1271px;top:154px;width:9px;height:41px;background:linear-gradient(90deg,#f4f4f4,#dcdcdc);border:1px solid #a8a8a8;border-radius:2px"></div>
<div class="a" style="left:1274px;top:172px;width:5px;height:5px;background:repeating-linear-gradient(180deg,#666 0 1px,transparent 1px 2px)"></div>
<svg class="a" style="left:1273px;top:676px" width="7" height="5" viewBox="0 0 7 5"><path d="M0.5 0.5 L3.5 4 L6.5 0.5Z" fill="#333"/></svg>
<div class="a" style="left:182px;top:685px;width:1089px;height:8px;background:#ececec;border-top:1px solid #e4e4e4"></div>
<svg class="a" style="left:186px;top:686px" width="5" height="6" viewBox="0 0 5 6"><path d="M4.5 0.5 L1 3 L4.5 5.5Z" fill="#333"/></svg>
<div class="a" style="left:194px;top:685px;width:231px;height:8px;background:linear-gradient(#f6f6f6,#dcdcdc);border:1px solid #a8a8a8;border-radius:2px"></div>
<div class="a" style="left:307px;top:687px;width:5px;height:4px;background:repeating-linear-gradient(90deg,#666 0 1px,transparent 1px 2px)"></div>
<svg class="a" style="left:1263px;top:686px" width="5" height="6" viewBox="0 0 5 6"><path d="M0.5 0.5 L4 3 L0.5 5.5Z" fill="#333"/></svg>
<div class="a" style="left:0;top:693px;width:1280px;height:27px;background:linear-gradient(90deg,#6a7060 0px,#8a8a60 40px,#3a4a78 80px,#2a3a70 118px,#24346a 600px,#1e2c60 1000px,#18264e 1280px);border-top:1px solid #101828"></div>
<div class="a" style="left:0;top:694px;width:1280px;height:12px;background:linear-gradient(rgba(255,255,255,0.16),rgba(255,255,255,0.04))"></div>
<div class="a" style="left:5px;top:695px;width:25px;height:24px;border-radius:50%;background:radial-gradient(circle at 50% 40%,#9ad0f0 0,#3a8ad0 35%,#1a4a90 70%,#0a2050 100%);box-shadow:0 0 2px #000"></div>
<div class="a" style="left:11px;top:701px;width:6px;height:5px;background:#f06030;border-radius:1px"></div><div class="a" style="left:18px;top:701px;width:6px;height:5px;background:#70c040;border-radius:1px"></div><div class="a" style="left:11px;top:707px;width:6px;height:5px;background:#30a0e0;border-radius:1px"></div><div class="a" style="left:18px;top:707px;width:6px;height:5px;background:#f0c020;border-radius:1px"></div>
<div class="a" style="left:49px;top:697px;width:17px;height:17px;background:linear-gradient(#e8f4e0,#a8d098);border:1px solid #5a8a4a"><div class="a" style="left:2px;top:1px;font-size:13px;font-weight:bold;line-height:14px;color:#1a8a2a">X</div></div>
<svg class="a" style="left:86px;top:696px" width="24" height="22" viewBox="0 0 24 22"><ellipse cx="12" cy="11" rx="11" ry="5" fill="none" stroke="#f0b830" stroke-width="1.6" transform="rotate(-30 12 11)"/><path d="M5 12 A7 7 0 1 1 19 12 L8.5 12 A3.8 3.8 0 0 0 15.5 15 L18.5 15 A7 7 0 0 1 5 12Z M8.7 9.5 L15.3 9.5 A3.5 3.5 0 0 0 8.7 9.5Z" fill="#2a9ae0" fill-rule="evenodd"/></svg>
<div class="a" style="left:118px;top:695px;width:85px;height:24px;background:linear-gradient(110deg,rgba(170,175,150,0.0) 0%,rgba(170,175,150,0.55) 35%,rgba(170,175,150,0) 60%),linear-gradient(#8a92b8,#626e98 50%,#4e5a88);border:1px solid #1a2240;border-radius:2px;box-shadow:inset 0 0 0 1px rgba(255,255,255,0.18)"></div>
<div class="a" style="left:124px;top:698px;width:16px;height:16px;border-radius:50%;background:#fff"></div><div class="a" style="left:124px;top:697px;width:16px;font-size:13px;line-height:18px;font-weight:bold;color:#e02020;text-align:center">Y</div>
<div class="a" style="left:145px;top:700px;font-size:8.2px;line-height:12px;color:#fff;text-shadow:0 0 2px rgba(0,0,0,0.5)">ЕСП: Личн...</div>
<div class="a" style="left:204px;top:695px;width:86px;height:24px;background:linear-gradient(90deg,#f0a040,#f4c870 50%,#e89a38);border:1px solid #8a6a30;border-radius:2px;box-shadow:inset 0 0 0 1px rgba(255,255,255,0.18)"></div>
<div class="a" style="left:210px;top:698px;width:16px;height:16px;border-radius:50%;background:#fff"></div><div class="a" style="left:210px;top:697px;width:16px;font-size:13px;line-height:18px;font-weight:bold;color:#e02020;text-align:center">Y</div>
<div class="a" style="left:231px;top:700px;font-size:8.2px;line-height:12px;color:#fffbe8;text-shadow:0 0 2px rgba(0,0,0,0.5)">Редактор ск...</div>
<div class="a" style="left:292px;top:695px;width:82px;height:24px;background:linear-gradient(110deg,rgba(170,175,150,0.0) 0%,rgba(170,175,150,0.55) 35%,rgba(170,175,150,0) 60%),linear-gradient(#8a92b8,#626e98 50%,#4e5a88);border:1px solid #1a2240;border-radius:2px;box-shadow:inset 0 0 0 1px rgba(255,255,255,0.18)"></div>
<div class="a" style="left:298px;top:700px;width:18px;height:14px;background:linear-gradient(#f8e8a0,#e0b850);border-radius:1px"></div><div class="a" style="left:300px;top:706px;width:14px;height:6px;background:#a8d8f0"></div>
<div class="a" style="left:319px;top:700px;font-size:8.2px;line-height:12px;color:#fff;text-shadow:0 0 2px rgba(0,0,0,0.5)">Проводник</div>
<div class="a" style="left:379px;top:695px;width:86px;height:24px;background:linear-gradient(110deg,rgba(170,175,150,0.0) 0%,rgba(170,175,150,0.55) 35%,rgba(170,175,150,0) 60%),linear-gradient(#8a92b8,#626e98 50%,#4e5a88);border:1px solid #1a2240;border-radius:2px;box-shadow:inset 0 0 0 1px rgba(255,255,255,0.18)"></div>
<div class="a" style="left:385px;top:698px;width:17px;height:17px;background:#1a8ac8;border-radius:3px"></div><div class="a" style="left:388px;top:704px;width:11px;height:6px;background:#6ad0f8;border-radius:4px"></div>
<div class="a" style="left:406px;top:700px;font-size:8.2px;line-height:12px;color:#fff;text-shadow:0 0 2px rgba(0,0,0,0.5)">Advanced R...</div>
<div class="a" style="left:467px;top:695px;width:85px;height:24px;background:linear-gradient(110deg,rgba(170,175,150,0.0) 0%,rgba(170,175,150,0.55) 35%,rgba(170,175,150,0) 60%),linear-gradient(#8a92b8,#626e98 50%,#4e5a88);border:1px solid #1a2240;border-radius:2px;box-shadow:inset 0 0 0 1px rgba(255,255,255,0.18)"></div>
<div class="a" style="left:473px;top:698px;width:17px;height:17px;border-radius:50%;background:linear-gradient(120deg,#e04040 50%,#333 50%)"></div>
<div class="a" style="left:494px;top:700px;font-size:8.2px;line-height:12px;color:#fff;text-shadow:0 0 2px rgba(0,0,0,0.5)">RuDesktop</div>
<div class="a" style="left:553px;top:695px;width:87px;height:24px;background:linear-gradient(110deg,rgba(170,175,150,0.0) 0%,rgba(170,175,150,0.55) 35%,rgba(170,175,150,0) 60%),linear-gradient(#8a92b8,#626e98 50%,#4e5a88);border:1px solid #1a2240;border-radius:2px;box-shadow:inset 0 0 0 1px rgba(255,255,255,0.18)"></div>
<div class="a" style="left:559px;top:697px;width:18px;height:18px;border-radius:50%;background:conic-gradient(#e04030 0 120deg,#f0c020 120deg 240deg,#30a050 240deg 360deg)"></div><div class="a" style="left:564px;top:702px;width:8px;height:8px;border-radius:50%;background:#3a80e0;border:1.5px solid #fff"></div>
<div class="a" style="left:580px;top:700px;font-size:8.2px;line-height:12px;color:#fff;text-shadow:0 0 2px rgba(0,0,0,0.5)">Термочек - ...</div>
<div class="a" style="left:641px;top:695px;width:86px;height:24px;background:linear-gradient(110deg,rgba(170,175,150,0.0) 0%,rgba(170,175,150,0.55) 35%,rgba(170,175,150,0) 60%),linear-gradient(#8a92b8,#626e98 50%,#4e5a88);border:1px solid #1a2240;border-radius:2px;box-shadow:inset 0 0 0 1px rgba(255,255,255,0.18)"></div>
<div class="a" style="left:647px;top:698px;width:15px;height:12px;background:linear-gradient(#3a6ae0,#1a3aa0);border:1px solid #ccd"></div><div class="a" style="left:656px;top:707px;width:8px;height:8px;border-radius:50%;background:#4aa04a;border:1px solid #fff"></div>
<div class="a" style="left:668px;top:700px;font-size:8.2px;line-height:12px;color:#fff;text-shadow:0 0 2px rgba(0,0,0,0.5)">192.168.255....</div>
<div class="a" style="left:728px;top:695px;width:84px;height:24px;background:linear-gradient(110deg,rgba(170,175,150,0.0) 0%,rgba(170,175,150,0.55) 35%,rgba(170,175,150,0) 60%),linear-gradient(#8a92b8,#626e98 50%,#4e5a88);border:1px solid #1a2240;border-radius:2px;box-shadow:inset 0 0 0 1px rgba(255,255,255,0.18)"></div>
<div class="a" style="left:734px;top:698px;width:15px;height:12px;background:linear-gradient(#3a6ae0,#1a3aa0);border:1px solid #ccd"></div><div class="a" style="left:743px;top:707px;width:8px;height:8px;border-radius:50%;background:#4aa04a;border:1px solid #fff"></div>
<div class="a" style="left:755px;top:700px;font-size:8.2px;line-height:12px;color:#fff;text-shadow:0 0 2px rgba(0,0,0,0.5)">192.168.1.24...</div>
<div class="a" style="left:814px;top:695px;width:84px;height:24px;background:linear-gradient(110deg,rgba(170,175,150,0.0) 0%,rgba(170,175,150,0.55) 35%,rgba(170,175,150,0) 60%),linear-gradient(#8a92b8,#626e98 50%,#4e5a88);border:1px solid #1a2240;border-radius:2px;box-shadow:inset 0 0 0 1px rgba(255,255,255,0.18)"></div>
<div class="a" style="left:820px;top:698px;width:16px;height:13px;background:linear-gradient(#7ab0e0,#2a5aa0);border:1px solid #ddd"></div><div class="a" style="left:819px;top:711px;width:18px;height:3px;background:#aaa"></div>
<div class="a" style="left:841px;top:700px;font-size:8.2px;line-height:12px;color:#fff;text-shadow:0 0 2px rgba(0,0,0,0.5)">50Т ИГОРЬ ...</div>
<div class="a" style="left:900px;top:695px;width:86px;height:24px;background:linear-gradient(110deg,rgba(170,175,150,0.0) 0%,rgba(170,175,150,0.55) 35%,rgba(170,175,150,0) 60%),linear-gradient(#8a92b8,#626e98 50%,#4e5a88);border:1px solid #1a2240;border-radius:2px;box-shadow:inset 0 0 0 1px rgba(255,255,255,0.18)"></div>
<div class="a" style="left:906px;top:698px;width:17px;height:17px;background:#fff;border:1px solid #888"></div><div class="a" style="left:907px;top:704px;font-size:8px;font-weight:bold;line-height:9px;color:#b02020;font-family:&quot;Liberation Serif&quot;,serif">Vnc</div><div class="a" style="left:912px;top:700px;width:8px;height:4px;border-radius:50%;background:#223a8a"></div>
<div class="a" style="left:927px;top:700px;font-size:8.2px;line-height:12px;color:#fff;text-shadow:0 0 2px rgba(0,0,0,0.5)">srv_schneid...</div>
<div class="a" style="left:988px;top:695px;width:83px;height:24px;background:linear-gradient(110deg,rgba(170,175,150,0.0) 0%,rgba(170,175,150,0.55) 35%,rgba(170,175,150,0) 60%),linear-gradient(#8a92b8,#626e98 50%,#4e5a88);border:1px solid #1a2240;border-radius:2px;box-shadow:inset 0 0 0 1px rgba(255,255,255,0.18)"></div>
<div class="a" style="left:994px;top:698px;width:17px;height:17px;background:#fff;border:1px solid #888"></div><div class="a" style="left:995px;top:704px;font-size:8px;font-weight:bold;line-height:9px;color:#b02020;font-family:&quot;Liberation Serif&quot;,serif">Vnc</div><div class="a" style="left:1000px;top:700px;width:8px;height:4px;border-radius:50%;background:#223a8a"></div>
<div class="a" style="left:1015px;top:700px;font-size:8.2px;line-height:12px;color:#fff;text-shadow:0 0 2px rgba(0,0,0,0.5)">uk - TightV...</div>
<div class="a" style="left:1073px;top:695px;width:84px;height:24px;background:linear-gradient(#c8ccd8,#9aa0b4);border:1px solid #5a6070;border-radius:2px;box-shadow:inset 0 0 0 1px rgba(255,255,255,0.18)"></div>
<div class="a" style="left:1079px;top:697px;width:18px;height:18px;background:linear-gradient(90deg,#40b040,#e0a030);border-radius:2px"></div><div class="a" style="left:1082px;top:701px;width:11px;height:7px;border:1.5px solid #fff;border-top:0"></div><div class="a" style="left:1080px;top:711px;width:16px;height:4px;background:#5a4ab0"></div>
<div class="a" style="left:1100px;top:700px;font-size:8.2px;line-height:12px;color:#fff;text-shadow:0 0 2px rgba(0,0,0,0.5)">Супермарк...</div>
<div class="a" style="left:1159px;top:694px;width:121px;height:26px;background:linear-gradient(#22305e,#1a2650)"></div>
<div class="a" style="left:1166px;top:700px;font-size:8.2px;line-height:12px;color:#e8ecf8">RU</div>
<div class="a" style="left:1181px;top:700px;width:11px;height:11px;border-radius:50%;background:radial-gradient(circle at 40% 35%,#6a8af0,#1a2aa0);border:1px solid #dde;color:#fff;font-size:8px;font-weight:bold;line-height:10px;text-align:center">?</div>
<div class="a" style="left:1198px;top:700px;width:5px;height:3px;border:1.5px solid #dde;border-bottom:0;border-radius:4px 4px 0 0"></div>
<svg class="a" style="left:1197px;top:706px" width="6" height="6" viewBox="0 0 6 6"><path d="M0 1 L6 1 L3 5Z" fill="#dde"/></svg>
<svg class="a" style="left:1210px;top:704px" width="7" height="5" viewBox="0 0 7 5"><path d="M0 5 L7 5 L3.5 0Z" fill="#dde"/></svg>
<div class="a" style="left:1223px;top:696.5px;width:44px;text-align:center;font-size:7.3px;line-height:11px;color:#fff">10:04<br>20.02.2026</div>
<div class="a" style="left:1271px;top:694px;width:9px;height:26px;background:linear-gradient(90deg,#3a4a70,#6a7898);border-left:1px solid #0a1020"></div>
</body></html>
